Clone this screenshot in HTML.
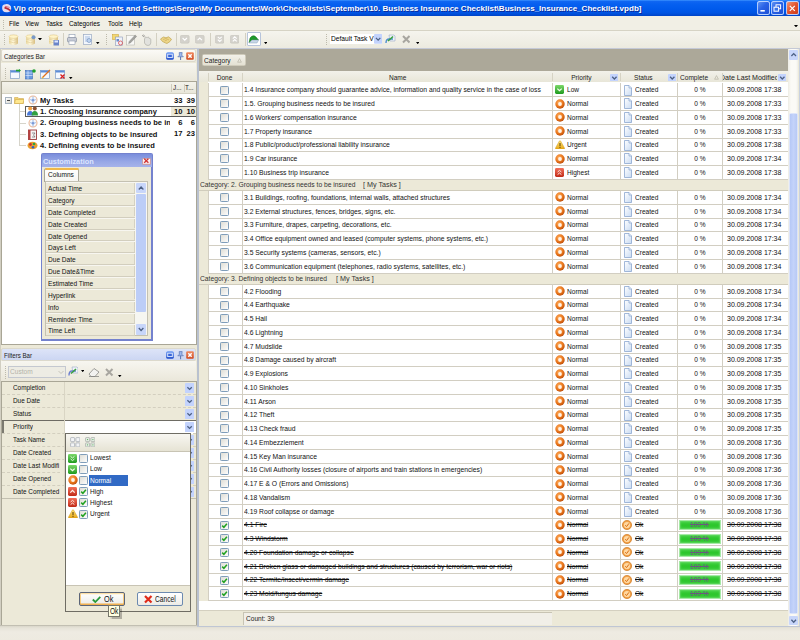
<!DOCTYPE html>
<html><head><meta charset="utf-8"><style>
html,body{margin:0;padding:0;width:800px;height:640px;overflow:hidden;background:#ECE9D8}
body{position:relative;font-family:"Liberation Sans",sans-serif}
body>div,body>svg{position:absolute}
div{box-sizing:border-box}
.t{position:absolute;white-space:nowrap;line-height:1;font-family:"Liberation Sans",sans-serif}
</style></head><body>
<div style="left:0;top:0;width:800px;height:15.8px;background:linear-gradient(#3D93FF 0px,#0F66F2 1.5px,#0660F0 4px,#005AEC 9px,#0054E2 13px,#0044C8 15.8px)"></div>
<svg style="position:absolute;left:1px;top:2.5px" width="11" height="10" viewBox="0 0 11 10"><path d="M1.2 4 Q1.5 1.2 4.5 1.2 Q7 0.8 8.6 2 Q10.6 3 10.2 6 Q9.8 9 6.5 9.2 Q3.5 9.6 2 8 Q0.8 6.5 1.2 4 Z" fill="#F2E4EE" opacity="0.95"/><path d="M3.5 4.6 Q6.5 5.2 9.6 7.6" fill="none" stroke="#B82838" stroke-width="1.6"/><path d="M4 3.4 Q6.5 3.4 8.6 4.6" fill="none" stroke="#D86878" stroke-width="0.9"/></svg>
<div class="t" style="left:13.5px;top:4.68px;font-size:8.05px;font-weight:bold;color:#FFFFFF;transform:scaleX(1.0);transform-origin:0 0;text-shadow:1px 1px 0 #0A2A9A;">Vip organizer [C:\Documents and Settings\Serge\My Documents\Work\Checklists\September\10. Business Insurance Checklist\Business_Insurance_Checklist.vpdb]</div>
<div style="left:757px;top:1.4px;width:12.6px;height:13.2px;border-radius:2.5px;background:linear-gradient(135deg,#6A9CF4,#2A62E6 45%,#1C4CD0);box-shadow:inset 0 0 0 0.9px #B8D2FF"></div>
<svg style="position:absolute;left:757px;top:1.5px" width="12.5" height="13" viewBox="0 0 12.5 13"><rect x="3.4" y="8" width="4.4" height="1.6" fill="#fff"/></svg>
<div style="left:771.3px;top:1.4px;width:12.6px;height:13.2px;border-radius:2.5px;background:linear-gradient(135deg,#6A9CF4,#2A62E6 45%,#1C4CD0);box-shadow:inset 0 0 0 0.9px #B8D2FF"></div>
<svg style="position:absolute;left:771.3px;top:1.5px" width="12.5" height="13" viewBox="0 0 12.5 13"><rect x="5" y="2.8" width="4.6" height="4" fill="none" stroke="#fff" stroke-width="1"/><rect x="3" y="5.2" width="4.6" height="4" fill="#3A72E8" stroke="#fff" stroke-width="1"/></svg>
<div style="left:786px;top:1.4px;width:12.6px;height:13.2px;border-radius:2.5px;background:linear-gradient(135deg,#F0A080,#E2542E 50%,#C83818);box-shadow:inset 0 0 0 0.9px #B8D2FF"></div>
<svg style="position:absolute;left:786px;top:1.5px" width="12.5" height="13" viewBox="0 0 12.5 13"><path d="M3.8 3.8 L8.8 8.8 M8.8 3.8 L3.8 8.8" stroke="#fff" stroke-width="1.2"/></svg>
<div style="left:0px;top:15.8px;width:800px;height:14.7px;background:#F1EFE5"></div>
<div style="left:0px;top:30.3px;width:800px;height:0.9px;background:#D6D3C5"></div>
<div style="left:3px;top:19.5px;width:1px;height:1px;background:#BDBAAC"></div>
<div style="left:3px;top:21.5px;width:1px;height:1px;background:#BDBAAC"></div>
<div style="left:3px;top:23.5px;width:1px;height:1px;background:#BDBAAC"></div>
<div style="left:3px;top:25.5px;width:1px;height:1px;background:#BDBAAC"></div>
<div style="left:3px;top:27.5px;width:1px;height:1px;background:#BDBAAC"></div>
<div class="t" style="left:8.7px;top:19.62px;font-size:8.0px;color:#000;transform:scaleX(0.8);transform-origin:0 0;">File</div>
<div class="t" style="left:25px;top:19.62px;font-size:8.0px;color:#000;transform:scaleX(0.8);transform-origin:0 0;">View</div>
<div class="t" style="left:45.5px;top:19.62px;font-size:8.0px;color:#000;transform:scaleX(0.8);transform-origin:0 0;">Tasks</div>
<div class="t" style="left:68.5px;top:19.62px;font-size:8.0px;color:#000;transform:scaleX(0.8);transform-origin:0 0;">Categories</div>
<div class="t" style="left:107.5px;top:19.62px;font-size:8.0px;color:#000;transform:scaleX(0.8);transform-origin:0 0;">Tools</div>
<div class="t" style="left:128.8px;top:19.62px;font-size:8.0px;color:#000;transform:scaleX(0.8);transform-origin:0 0;">Help</div>
<svg style="position:absolute;left:793.5px;top:24.8px" width="4" height="2.4" viewBox="0 0 4 2.4"><path d="M0 0 L4 0 L2 2.4 Z" fill="#000"/></svg>
<div style="left:0px;top:31.2px;width:800px;height:16.6px;background:linear-gradient(#F5F4EE,#ECEADF)"></div>
<div style="left:0px;top:47.5px;width:800px;height:1.2px;background:#C4C9D6"></div>
<div style="left:3.5px;top:34px;width:1px;height:1px;background:#BDBAAC"></div>
<div style="left:3.5px;top:36px;width:1px;height:1px;background:#BDBAAC"></div>
<div style="left:3.5px;top:38px;width:1px;height:1px;background:#BDBAAC"></div>
<div style="left:3.5px;top:40px;width:1px;height:1px;background:#BDBAAC"></div>
<div style="left:3.5px;top:42px;width:1px;height:1px;background:#BDBAAC"></div>
<div style="left:3.5px;top:44px;width:1px;height:1px;background:#BDBAAC"></div>
<svg style="position:absolute;left:8px;top:33.5px" width="11" height="12" viewBox="0 0 11 12"><defs><linearGradient id="dbg" x1="0" x2="1"><stop offset="0" stop-color="#EAD8A0"/><stop offset="0.45" stop-color="#FFF8DC"/><stop offset="1" stop-color="#D8BE80"/></linearGradient></defs><path d="M1 2.5 Q5.5 -0.5 10 2.5 L10 9.5 Q5.5 12.5 1 9.5 Z" fill="url(#dbg)"/><ellipse cx="5.5" cy="2.6" rx="4.5" ry="1.8" fill="#FFF4C8" stroke="#D8C080" stroke-width="0.5"/><path d="M1 5 Q5.5 7.5 10 5 M1 7.5 Q5.5 10 10 7.5" fill="none" stroke="#DCC488" stroke-width="0.5"/></svg>
<svg style="position:absolute;left:24.5px;top:33.5px" width="11" height="12" viewBox="0 0 11 12"><defs><linearGradient id="dbg" x1="0" x2="1"><stop offset="0" stop-color="#EAD8A0"/><stop offset="0.45" stop-color="#FFF8DC"/><stop offset="1" stop-color="#D8BE80"/></linearGradient></defs><path d="M1 2.5 Q5.5 -0.5 10 2.5 L10 9.5 Q5.5 12.5 1 9.5 Z" fill="url(#dbg)"/><ellipse cx="5.5" cy="2.6" rx="4.5" ry="1.8" fill="#FFF4C8" stroke="#D8C080" stroke-width="0.5"/><path d="M1 5 Q5.5 7.5 10 5 M1 7.5 Q5.5 10 10 7.5" fill="none" stroke="#DCC488" stroke-width="0.5"/><circle cx="8.5" cy="3.2" r="2" fill="#7A9AC8"/></svg>
<svg style="position:absolute;left:38px;top:37.5px" width="4" height="2.5" viewBox="0 0 4 2.5"><path d="M0 0 L4 0 L2 2.5 Z" fill="#000"/></svg>
<svg style="position:absolute;left:47.5px;top:33.5px" width="11" height="12" viewBox="0 0 11 12"><defs><linearGradient id="dbg" x1="0" x2="1"><stop offset="0" stop-color="#EAD8A0"/><stop offset="0.45" stop-color="#FFF8DC"/><stop offset="1" stop-color="#D8BE80"/></linearGradient></defs><path d="M1 2.5 Q5.5 -0.5 10 2.5 L10 9.5 Q5.5 12.5 1 9.5 Z" fill="url(#dbg)"/><ellipse cx="5.5" cy="2.6" rx="4.5" ry="1.8" fill="#FFF4C8" stroke="#D8C080" stroke-width="0.5"/><path d="M1 5 Q5.5 7.5 10 5 M1 7.5 Q5.5 10 10 7.5" fill="none" stroke="#DCC488" stroke-width="0.5"/><rect x="5.5" y="6" width="5.5" height="5.5" fill="#6A84C8"/><rect x="6.5" y="6.5" width="3.5" height="2" fill="#DDE6FF"/></svg>
<div style="left:62.5px;top:33px;width:0.8px;height:13px;background:#D3D0C2"></div>
<svg style="position:absolute;left:67px;top:34px" width="10" height="11" viewBox="0 0 10 11"><rect x="2" y="0.5" width="6" height="3.5" fill="#fff" stroke="#8C9AB0" stroke-width="0.6"/><rect x="0.5" y="3.5" width="9" height="4.5" rx="1" fill="#C8CCD6" stroke="#7C8698" stroke-width="0.6"/><rect x="2" y="7" width="6" height="3.5" fill="#fff" stroke="#8C9AB0" stroke-width="0.6"/></svg>
<svg style="position:absolute;left:82.5px;top:34px" width="10" height="11" viewBox="0 0 10 11"><rect x="0.5" y="0.5" width="8" height="10" fill="#F2F6FC" stroke="#9AAAC4" stroke-width="0.7"/><path d="M2 3 H7 M2 5 H7 M2 7 H6" stroke="#8AAAD8" stroke-width="0.7"/><circle cx="6" cy="6.5" r="2" fill="#BFD4F0" stroke="#6A8AB8" stroke-width="0.6"/></svg>
<svg style="position:absolute;left:96px;top:42px" width="3.5" height="2.2" viewBox="0 0 3.5 2.2"><path d="M0 0 L3.5 0 L1.75 2.2 Z" fill="#000"/></svg>
<div style="left:105.5px;top:34px;width:1px;height:1px;background:#BDBAAC"></div>
<div style="left:105.5px;top:36px;width:1px;height:1px;background:#BDBAAC"></div>
<div style="left:105.5px;top:38px;width:1px;height:1px;background:#BDBAAC"></div>
<div style="left:105.5px;top:40px;width:1px;height:1px;background:#BDBAAC"></div>
<div style="left:105.5px;top:42px;width:1px;height:1px;background:#BDBAAC"></div>
<div style="left:105.5px;top:44px;width:1px;height:1px;background:#BDBAAC"></div>
<svg style="position:absolute;left:111.5px;top:33.5px" width="11" height="12" viewBox="0 0 11 12"><rect x="0.5" y="0.5" width="6" height="5" fill="#F4D870" stroke="#C8A030" stroke-width="0.5"/><rect x="3.5" y="3" width="7" height="8.5" fill="#EEF2FA" stroke="#8C9AB8" stroke-width="0.6"/><rect x="4.5" y="5" width="2.5" height="2.5" fill="#6A8ACB"/><circle cx="8.5" cy="9" r="2" fill="none" stroke="#E05050" stroke-width="0.8"/></svg>
<svg style="position:absolute;left:125.5px;top:33.5px" width="11" height="12" viewBox="0 0 11 12"><rect x="0.5" y="1.5" width="8" height="9.5" fill="#F8F8F6" stroke="#B4B4AE" stroke-width="0.6"/><path d="M2.6 9.6 L3.2 7.4 L9.2 1 L10.6 2.4 L4.6 8.8 Z" fill="#A2A29E" stroke="#7E7E7A" stroke-width="0.4"/></svg>
<svg style="position:absolute;left:140.5px;top:33.5px" width="11" height="12" viewBox="0 0 11 12"><path d="M3.5 5 L3.5 9 Q4.5 11.5 7 11.5 Q9.5 11.5 9.8 9 L9.8 5.5 Q9.8 4.5 8.8 4.5 L8.2 4.5 L8 3.5 Q7.2 2.8 6.5 3.4 L5.2 3.4 Q4.6 3 4.2 3.6 Z" fill="#E2E2DE" stroke="#A6A6A0" stroke-width="0.6"/><path d="M1 1.2 L3.2 3.2 M2.5 0.6 L3.8 2.6" stroke="#9A9A94" stroke-width="0.9"/></svg>
<div style="left:156px;top:33px;width:0.8px;height:13px;background:#D3D0C2"></div>
<svg style="position:absolute;left:159.5px;top:34.5px" width="12" height="10" viewBox="0 0 12 10"><path d="M0.5 4 L3.5 2 L6 2.8 L8.5 1.8 L11.5 4.2 L10 6.5 L7 8.5 L5.5 8 L2.5 6.5 Z" fill="#EDD68A" stroke="#B89A40" stroke-width="0.6"/><path d="M3 4.5 L6 3.5 L9 5 M4.5 6 L7 5" fill="none" stroke="#C8A850" stroke-width="0.6"/></svg>
<div style="left:175.5px;top:33px;width:0.8px;height:13px;background:#D3D0C2"></div>
<svg style="position:absolute;left:180.2px;top:35.3px" width="9.5" height="8.5" viewBox="0 0 9.5 8.5"><rect x="0.3" y="0.3" width="8.9" height="7.9" rx="1.5" fill="#D4D2CC" stroke="#C2C0B8" stroke-width="0.5"/><path d="M2.6 3 L4.75 5.2 L6.9 3" fill="none" stroke="#FFFFFF" stroke-width="1.1"/></svg>
<svg style="position:absolute;left:195.3px;top:35.3px" width="9.5" height="8.5" viewBox="0 0 9.5 8.5"><rect x="0.3" y="0.3" width="8.9" height="7.9" rx="1.5" fill="#D4D2CC" stroke="#C2C0B8" stroke-width="0.5"/><path d="M2.6 5.2 L4.75 3 L6.9 5.2" fill="none" stroke="#FFFFFF" stroke-width="1.1"/></svg>
<div style="left:209.6px;top:33px;width:0.8px;height:13px;background:#D3D0C2"></div>
<svg style="position:absolute;left:214.8px;top:35.3px" width="9.5" height="8.5" viewBox="0 0 9.5 8.5"><rect x="0.3" y="0.3" width="8.9" height="7.9" rx="1.5" fill="#D4D2CC" stroke="#C2C0B8" stroke-width="0.5"/><path d="M2.8 1.8 L4.75 3.6 L6.7 1.8 M2.8 4.6 L4.75 6.4 L6.7 4.6" fill="none" stroke="#FFFFFF" stroke-width="1.1"/></svg>
<svg style="position:absolute;left:229.8px;top:35.3px" width="9.5" height="8.5" viewBox="0 0 9.5 8.5"><rect x="0.3" y="0.3" width="8.9" height="7.9" rx="1.5" fill="#D4D2CC" stroke="#C2C0B8" stroke-width="0.5"/><path d="M2.8 3.6 L4.75 1.8 L6.7 3.6 M2.8 6.4 L4.75 4.6 L6.7 6.4" fill="none" stroke="#FFFFFF" stroke-width="1.1"/></svg>
<div style="left:244.6px;top:33px;width:0.8px;height:13px;background:#D3D0C2"></div>
<div style="left:246.5px;top:32.2px;width:14px;height:13.8px;background:#FFFFFF;border:0.8px solid #B7C4DB;box-sizing:border-box;border-radius:1px"></div>
<svg style="position:absolute;left:248px;top:34px" width="11" height="10" viewBox="0 0 11 10"><path d="M1 9 L2 4 Q5 0 8 3 L10.5 6 L4 6 Z" fill="#1E9A2A" stroke="#0E6A18" stroke-width="0.5"/><path d="M1 9 L4 6 L10.5 6 L9 9 Z" fill="#C8D8E8" stroke="#8AA0B8" stroke-width="0.5"/></svg>
<svg style="position:absolute;left:263.5px;top:42.2px" width="3.5" height="2.2" viewBox="0 0 3.5 2.2"><path d="M0 0 L3.5 0 L1.75 2.2 Z" fill="#000"/></svg>
<div style="left:326px;top:34px;width:1px;height:1px;background:#BDBAAC"></div>
<div style="left:326px;top:36px;width:1px;height:1px;background:#BDBAAC"></div>
<div style="left:326px;top:38px;width:1px;height:1px;background:#BDBAAC"></div>
<div style="left:326px;top:40px;width:1px;height:1px;background:#BDBAAC"></div>
<div style="left:326px;top:42px;width:1px;height:1px;background:#BDBAAC"></div>
<div style="left:326px;top:44px;width:1px;height:1px;background:#BDBAAC"></div>
<div style="left:329.8px;top:34.2px;width:52.5px;height:10.2px;background:#FFFFFF"></div>
<div class="t" style="left:331.2px;top:35.32px;font-size:8.0px;color:#000;transform:scaleX(0.83);transform-origin:0 0;width:52px;overflow:hidden;">Default Task V</div>
<svg style="position:absolute;left:374px;top:34.4px" width="8.3" height="9.8" viewBox="0 0 8.3 9.8"><rect x="0" y="0" width="8.3" height="9.8" rx="1" fill="#C3D3FD"/><path d="M2.3 3 L4.5 5.2 L6.7 3" transform="translate(-0.34999999999999964,0.9000000000000004)" fill="none" stroke="#4D6185" stroke-width="1.3"/></svg>
<svg style="position:absolute;left:385.4px;top:34px" width="11" height="11" viewBox="0 0 11 11"><path d="M4 1 L9 1 L10 2 L10 7 L5 7 Z" fill="#F0F4FA" stroke="#9AAAC8" stroke-width="0.6"/><path d="M1 9 Q1 5 4 5 L8 5" fill="none" stroke="#4E8ED0" stroke-width="1.4"/><path d="M3 7 L8 2.5" stroke="#3AA040" stroke-width="1.6"/></svg>
<svg style="position:absolute;left:401.6px;top:35px" width="8.5" height="8.5" viewBox="0 0 8.5 8.5"><path d="M1 1 L7.5 7.5 M7.5 1 L1 7.5" stroke="#A8A6A0" stroke-width="2"/></svg>
<svg style="position:absolute;left:415.8px;top:42.2px" width="3.5" height="2.2" viewBox="0 0 3.5 2.2"><path d="M0 0 L3.5 0 L1.75 2.2 Z" fill="#000"/></svg>
<div style="left:0px;top:48.7px;width:197px;height:591.3px;background:#ECE9D8"></div>
<div style="left:0px;top:48.7px;width:0.9px;height:577px;background:#D2CFC2"></div>
<div style="left:1.3px;top:48.8px;width:195px;height:13.700000000000003px;background:linear-gradient(#FBFAF6,#F1EFE6);border:0.7px solid #DCD9CC;box-sizing:border-box;border-radius:2px"></div>
<div class="t" style="left:3.8px;top:52.72px;font-size:8.0px;color:#222;transform:scaleX(0.77);transform-origin:0 0;">Categories Bar</div>
<svg style="position:absolute;left:166px;top:51.9px" width="8" height="8" viewBox="0 0 8 8"><defs><linearGradient id="dk" x1="0" y1="0" x2="0" y2="1"><stop offset="0" stop-color="#6A9AF4"/><stop offset="1" stop-color="#1A48C8"/></linearGradient></defs><rect x="0.2" y="0.2" width="7.6" height="7.6" rx="1.6" fill="url(#dk)"/><rect x="1.7" y="2.2" width="4.6" height="3.4" fill="#3A66D8" stroke="#E8F0FF" stroke-width="0.9"/></svg>
<svg style="position:absolute;left:176.5px;top:51.9px" width="7" height="8.5" viewBox="0 0 7 8.5"><path d="M2.2 0.6 H5.2 L4.8 3.2 L6.4 4.8 H0.8 L2.4 3.2 Z" fill="#9CB8F0" stroke="#4A66A8" stroke-width="0.6"/><path d="M3.6 4.8 V8.2" stroke="#4A66A8" stroke-width="0.9"/></svg>
<svg style="position:absolute;left:186px;top:51.9px" width="8" height="8" viewBox="0 0 8 8"><defs><linearGradient id="cl" x1="0" y1="0" x2="0" y2="1"><stop offset="0" stop-color="#F08A60"/><stop offset="1" stop-color="#D04A20"/></linearGradient></defs><rect x="0.2" y="0.2" width="7.6" height="7.6" rx="1" fill="url(#cl)"/><path d="M2.3 2.3 L5.7 5.7 M5.7 2.3 L2.3 5.7" stroke="#fff" stroke-width="1.5"/></svg>
<div style="left:1.3px;top:62.5px;width:195px;height:18.8px;background:linear-gradient(#F7F6F0,#EAE7DA)"></div>
<div style="left:4.5px;top:67.5px;width:1px;height:1px;background:#BDBAAC"></div>
<div style="left:4.5px;top:69.5px;width:1px;height:1px;background:#BDBAAC"></div>
<div style="left:4.5px;top:71.5px;width:1px;height:1px;background:#BDBAAC"></div>
<div style="left:4.5px;top:73.5px;width:1px;height:1px;background:#BDBAAC"></div>
<div style="left:4.5px;top:75.5px;width:1px;height:1px;background:#BDBAAC"></div>
<div style="left:4.5px;top:77.5px;width:1px;height:1px;background:#BDBAAC"></div>
<svg style="position:absolute;left:10px;top:68.5px" width="11" height="11" viewBox="0 0 11 11"><rect x="0.5" y="1.5" width="9" height="8" fill="#F4F8FF" stroke="#7C9CC8" stroke-width="0.7"/><rect x="0.5" y="1.5" width="9" height="2" fill="#5C8CD8"/><path d="M6 1.5 L10 1.5" stroke="#20A030" stroke-width="1.6"/><path d="M9 0 L11 1.5 L9 3" fill="#20A030"/></svg>
<svg style="position:absolute;left:25px;top:68.5px" width="11" height="11" viewBox="0 0 11 11"><rect x="0.5" y="1.5" width="7" height="8.5" fill="#6A9AE0" stroke="#3A6AB8" stroke-width="0.6"/><path d="M0.5 4 H7.5 M0.5 6.5 H7.5 M3 1.5 V10" stroke="#E8F0FF" stroke-width="0.6"/><circle cx="9" cy="2" r="1.8" fill="#20A030"/></svg>
<svg style="position:absolute;left:40px;top:68.5px" width="11" height="11" viewBox="0 0 11 11"><rect x="0.5" y="1.5" width="9" height="8" fill="#F4F8FF" stroke="#7C9CC8" stroke-width="0.7"/><rect x="0.5" y="1.5" width="9" height="2" fill="#5C8CD8"/><path d="M2 9 L10 1" stroke="#E07020" stroke-width="1.3"/><path d="M2 9 L3.5 8.5" stroke="#F0D040" stroke-width="1.3"/></svg>
<svg style="position:absolute;left:55px;top:68.5px" width="11" height="11" viewBox="0 0 11 11"><rect x="0.5" y="1.5" width="9" height="8" fill="#F4F8FF" stroke="#7C9CC8" stroke-width="0.7"/><rect x="0.5" y="1.5" width="9" height="2" fill="#5C8CD8"/><path d="M5.5 5.5 L9.5 9.5 M9.5 5.5 L5.5 9.5" stroke="#D82020" stroke-width="1.3"/></svg>
<svg style="position:absolute;left:69px;top:76.5px" width="3.5" height="2.2" viewBox="0 0 3.5 2.2"><path d="M0 0 L3.5 0 L1.75 2.2 Z" fill="#000"/></svg>
<div style="left:1.2px;top:81.2px;width:195.6px;height:264px;background:#FFFFFF;border:0.8px solid #A9A696;box-sizing:border-box"></div>
<div style="left:2px;top:82px;width:194px;height:11px;background:linear-gradient(#F3F2EA,#E9E7DA)"></div>
<div style="left:2px;top:92.6px;width:194px;height:0.8px;background:#D5D2C3"></div>
<div style="left:171px;top:83.5px;width:0.7px;height:8.5px;background:#CFCCBD"></div>
<div style="left:183.5px;top:83.5px;width:0.7px;height:8.5px;background:#CFCCBD"></div>
<div class="t" style="left:172.7px;top:83.52px;font-size:8.0px;color:#222;transform:scaleX(0.8);transform-origin:0 0;">J...</div>
<div class="t" style="left:185.2px;top:83.52px;font-size:8.0px;color:#222;transform:scaleX(0.8);transform-origin:0 0;">T...</div>
<div style="left:5px;top:97px;width:6.5px;height:6.5px;border:0.7px solid #A8B4C0;box-sizing:border-box;background:linear-gradient(135deg,#FFFFFF,#D8D8D0)"></div>
<div style="left:6.5px;top:99.9px;width:3.5px;height:0.8px;background:#4A4A4A"></div>
<div style="left:19.3px;top:104px;width:0.8px;height:41.5px;background:#D6D4CA"></div>
<div style="left:20px;top:111.3px;width:5.5px;height:0.8px;background:#D6D4CA"></div>
<div style="left:20px;top:122.5px;width:5.5px;height:0.8px;background:#D6D4CA"></div>
<div style="left:20px;top:133.8px;width:5.5px;height:0.8px;background:#D6D4CA"></div>
<div style="left:20px;top:145px;width:5.5px;height:0.8px;background:#D6D4CA"></div>
<svg style="position:absolute;left:13.5px;top:96px" width="10" height="8" viewBox="0 0 10 8"><path d="M0.5 1.5 H4 L5 2.5 H9.5 V7.5 H0.5 Z" fill="#F0D070" stroke="#C8A040" stroke-width="0.5"/><path d="M1.5 3.5 H10 L9 7.5 H0.5 Z" fill="#FFE890" stroke="#C8A040" stroke-width="0.5"/></svg>
<svg style="position:absolute;left:27.5px;top:95px" width="10" height="10" viewBox="0 0 10 10"><circle cx="5" cy="5" r="4" fill="#F4F8FF" stroke="#EAB898" stroke-width="1.1"/><path d="M5 1.5 V8.5 M2.2 4.6 Q5 6.2 7.8 4.6" fill="none" stroke="#8AAAD8" stroke-width="0.8"/><circle cx="5" cy="5.2" r="1.2" fill="#7A9AD8"/></svg>
<div class="t" style="left:40px;top:96.85px;font-size:7.5px;font-weight:bold;color:#111;transform:scaleX(1.0);transform-origin:0 0;letter-spacing:0.05px;">My Tasks</div>
<div class="t" style="left:182.5px;width:0;display:flex;justify-content:flex-end;top:96.76px;font-size:7.6px;font-weight:bold;color:#111;"><span style="display:inline-block;transform:scaleX(1.0);transform-origin:100% 0">33</span></div>
<div class="t" style="left:195px;width:0;display:flex;justify-content:flex-end;top:96.76px;font-size:7.6px;font-weight:bold;color:#111;"><span style="display:inline-block;transform:scaleX(1.0);transform-origin:100% 0">39</span></div>
<div style="left:25.2px;top:105.6px;width:171px;height:11.3px;border:1px solid #5A5A5A;box-sizing:border-box;background:#fff"></div>
<div style="left:171px;top:106.6px;width:24.6px;height:9.3px;background:#ECE9D8"></div>
<svg style="position:absolute;left:27px;top:106.3px" width="11" height="10" viewBox="0 0 11 10"><circle cx="3.2" cy="2.6" r="2" fill="#F0A040"/><path d="M0 9.5 Q0 5 3.2 5 Q6.4 5 6.4 9.5 Z" fill="#4A7AD8"/><circle cx="7.8" cy="2.6" r="2" fill="#8A5030"/><path d="M4.6 9.5 Q4.6 5 7.8 5 Q11 5 11 9.5 Z" fill="#30A040"/></svg>
<div class="t" style="left:40px;top:108.05px;font-size:7.5px;font-weight:bold;color:#111;transform:scaleX(1.0);transform-origin:0 0;letter-spacing:0.05px;">1. Choosing insurance company</div>
<div class="t" style="left:182.5px;width:0;display:flex;justify-content:flex-end;top:107.96px;font-size:7.6px;font-weight:bold;color:#111;"><span style="display:inline-block;transform:scaleX(1.0);transform-origin:100% 0">10</span></div>
<div class="t" style="left:195px;width:0;display:flex;justify-content:flex-end;top:107.96px;font-size:7.6px;font-weight:bold;color:#111;"><span style="display:inline-block;transform:scaleX(1.0);transform-origin:100% 0">10</span></div>
<svg style="position:absolute;left:27.5px;top:117.5px" width="10" height="10" viewBox="0 0 10 10"><circle cx="5" cy="5" r="4" fill="#F4F8FF" stroke="#EAB898" stroke-width="1.1"/><path d="M5 1.5 V8.5 M2.2 4.6 Q5 6.2 7.8 4.6" fill="none" stroke="#8AAAD8" stroke-width="0.8"/><circle cx="5" cy="5.2" r="1.2" fill="#7A9AD8"/></svg>
<div class="t" style="left:40px;top:119.35px;font-size:7.5px;font-weight:bold;color:#111;transform:scaleX(1.0);transform-origin:0 0;letter-spacing:0.05px;">2. Grouping business needs to be in:</div>
<div style="left:170px;top:118px;width:26px;height:10px;background:#fff"></div>
<div class="t" style="left:182.5px;width:0;display:flex;justify-content:flex-end;top:119.26px;font-size:7.6px;font-weight:bold;color:#111;"><span style="display:inline-block;transform:scaleX(1.0);transform-origin:100% 0">6</span></div>
<div class="t" style="left:195px;width:0;display:flex;justify-content:flex-end;top:119.26px;font-size:7.6px;font-weight:bold;color:#111;"><span style="display:inline-block;transform:scaleX(1.0);transform-origin:100% 0">6</span></div>
<svg style="position:absolute;left:28px;top:128.5px" width="9" height="11" viewBox="0 0 9 11"><rect x="0.5" y="1" width="8" height="9.5" fill="#F6F2F2" stroke="#9A3A3A" stroke-width="0.9"/><rect x="0.5" y="1" width="2" height="9.5" fill="#B84040"/><path d="M4 4 H7 L5.5 6 L7 8 H4" fill="none" stroke="#555" stroke-width="0.6"/></svg>
<div class="t" style="left:40px;top:130.55px;font-size:7.5px;font-weight:bold;color:#111;transform:scaleX(1.0);transform-origin:0 0;letter-spacing:0.05px;">3. Defining objects to be insured</div>
<div class="t" style="left:182.5px;width:0;display:flex;justify-content:flex-end;top:130.46px;font-size:7.6px;font-weight:bold;color:#111;"><span style="display:inline-block;transform:scaleX(1.0);transform-origin:100% 0">17</span></div>
<div class="t" style="left:195px;width:0;display:flex;justify-content:flex-end;top:130.46px;font-size:7.6px;font-weight:bold;color:#111;"><span style="display:inline-block;transform:scaleX(1.0);transform-origin:100% 0">23</span></div>
<svg style="position:absolute;left:27px;top:140.5px" width="11" height="9" viewBox="0 0 11 9"><ellipse cx="5.5" cy="4.5" rx="5" ry="3.8" fill="#E8A030"/><circle cx="3.5" cy="3.5" r="1.4" fill="#D03030"/><circle cx="7" cy="3" r="1.3" fill="#30A040"/><circle cx="6" cy="6.2" r="1.3" fill="#3060C0"/></svg>
<div class="t" style="left:40px;top:141.75px;font-size:7.5px;font-weight:bold;color:#111;transform:scaleX(1.0);transform-origin:0 0;letter-spacing:0.05px;">4. Defining events to be insured</div>
<div style="left:40.8px;top:153px;width:111.8px;height:188px;background:#7482CE;border-radius:2px 2px 0 0"></div>
<div style="left:41.6px;top:153.6px;width:110.2px;height:13px;background:linear-gradient(#7A8EDC,#98A8E6 60%,#A6B3EA)"></div>
<div class="t" style="left:43.2px;top:157.92px;font-size:8.0px;font-weight:bold;color:#DDE6FF;transform:scaleX(0.92);transform-origin:0 0;">Customization</div>
<div style="left:141.6px;top:157.6px;width:9px;height:7.2px;background:linear-gradient(#FFFFFF,#F2D8DC);border:0.6px solid #C8A0A8;box-sizing:border-box;border-radius:1px"></div>
<svg style="position:absolute;left:142.8px;top:158.4px" width="6.6" height="5.6" viewBox="0 0 6.6 5.6"><path d="M1.2 0.8 L5.4 4.8 M5.4 0.8 L1.2 4.8" stroke="#D03030" stroke-width="1.2"/></svg>
<div style="left:42.3px;top:166.6px;width:108.8px;height:172.7px;background:#ECE9D8"></div>
<div style="left:44.4px;top:168px;width:34.8px;height:14.2px;background:linear-gradient(#FFFFFF,#F6F5F0);border:0.7px solid #A8A698;border-bottom:none;box-sizing:border-box;border-radius:2.5px 2.5px 0 0"></div>
<div style="left:44.6px;top:168px;width:34.4px;height:1.8px;background:#F0B848;border-radius:2px 2px 0 0"></div>
<div class="t" style="left:48.2px;top:171.12px;font-size:8.0px;color:#111;transform:scaleX(0.82);transform-origin:0 0;">Columns</div>
<div style="left:44.6px;top:180.8px;width:103.2px;height:155px;background:#F8F7F2;border:1.2px solid #C4C1B2;box-sizing:border-box"></div>
<div style="left:45.7px;top:182.20px;width:89.3px;height:11.9px;background:#ECE9D8;border-top:0.8px solid #F7F6F0;border-bottom:1px solid #D2CEBE;box-sizing:border-box"></div>
<div style="left:134.2px;top:183.2px;width:0.7px;height:9.6px;background:#D5D1C0"></div>
<div class="t" style="left:47.5px;top:185.22px;font-size:8.0px;color:#111;transform:scaleX(0.82);transform-origin:0 0;">Actual Time</div>
<div style="left:45.7px;top:194.05px;width:89.3px;height:11.9px;background:#ECE9D8;border-top:0.8px solid #F7F6F0;border-bottom:1px solid #D2CEBE;box-sizing:border-box"></div>
<div style="left:134.2px;top:195.04999999999998px;width:0.7px;height:9.6px;background:#D5D1C0"></div>
<div class="t" style="left:47.5px;top:197.07px;font-size:8.0px;color:#111;transform:scaleX(0.82);transform-origin:0 0;">Category</div>
<div style="left:45.7px;top:205.90px;width:89.3px;height:11.9px;background:#ECE9D8;border-top:0.8px solid #F7F6F0;border-bottom:1px solid #D2CEBE;box-sizing:border-box"></div>
<div style="left:134.2px;top:206.89999999999998px;width:0.7px;height:9.6px;background:#D5D1C0"></div>
<div class="t" style="left:47.5px;top:208.92px;font-size:8.0px;color:#111;transform:scaleX(0.82);transform-origin:0 0;">Date Completed</div>
<div style="left:45.7px;top:217.75px;width:89.3px;height:11.9px;background:#ECE9D8;border-top:0.8px solid #F7F6F0;border-bottom:1px solid #D2CEBE;box-sizing:border-box"></div>
<div style="left:134.2px;top:218.75px;width:0.7px;height:9.6px;background:#D5D1C0"></div>
<div class="t" style="left:47.5px;top:220.77px;font-size:8.0px;color:#111;transform:scaleX(0.82);transform-origin:0 0;">Date Created</div>
<div style="left:45.7px;top:229.60px;width:89.3px;height:11.9px;background:#ECE9D8;border-top:0.8px solid #F7F6F0;border-bottom:1px solid #D2CEBE;box-sizing:border-box"></div>
<div style="left:134.2px;top:230.6px;width:0.7px;height:9.6px;background:#D5D1C0"></div>
<div class="t" style="left:47.5px;top:232.62px;font-size:8.0px;color:#111;transform:scaleX(0.82);transform-origin:0 0;">Date Opened</div>
<div style="left:45.7px;top:241.45px;width:89.3px;height:11.9px;background:#ECE9D8;border-top:0.8px solid #F7F6F0;border-bottom:1px solid #D2CEBE;box-sizing:border-box"></div>
<div style="left:134.2px;top:242.45px;width:0.7px;height:9.6px;background:#D5D1C0"></div>
<div class="t" style="left:47.5px;top:244.47px;font-size:8.0px;color:#111;transform:scaleX(0.82);transform-origin:0 0;">Days Left</div>
<div style="left:45.7px;top:253.30px;width:89.3px;height:11.9px;background:#ECE9D8;border-top:0.8px solid #F7F6F0;border-bottom:1px solid #D2CEBE;box-sizing:border-box"></div>
<div style="left:134.2px;top:254.29999999999998px;width:0.7px;height:9.6px;background:#D5D1C0"></div>
<div class="t" style="left:47.5px;top:256.32px;font-size:8.0px;color:#111;transform:scaleX(0.82);transform-origin:0 0;">Due Date</div>
<div style="left:45.7px;top:265.15px;width:89.3px;height:11.9px;background:#ECE9D8;border-top:0.8px solid #F7F6F0;border-bottom:1px solid #D2CEBE;box-sizing:border-box"></div>
<div style="left:134.2px;top:266.15px;width:0.7px;height:9.6px;background:#D5D1C0"></div>
<div class="t" style="left:47.5px;top:268.17px;font-size:8.0px;color:#111;transform:scaleX(0.82);transform-origin:0 0;">Due Date&amp;Time</div>
<div style="left:45.7px;top:277.00px;width:89.3px;height:11.9px;background:#ECE9D8;border-top:0.8px solid #F7F6F0;border-bottom:1px solid #D2CEBE;box-sizing:border-box"></div>
<div style="left:134.2px;top:278.0px;width:0.7px;height:9.6px;background:#D5D1C0"></div>
<div class="t" style="left:47.5px;top:280.02px;font-size:8.0px;color:#111;transform:scaleX(0.82);transform-origin:0 0;">Estimated Time</div>
<div style="left:45.7px;top:288.85px;width:89.3px;height:11.9px;background:#ECE9D8;border-top:0.8px solid #F7F6F0;border-bottom:1px solid #D2CEBE;box-sizing:border-box"></div>
<div style="left:134.2px;top:289.84999999999997px;width:0.7px;height:9.6px;background:#D5D1C0"></div>
<div class="t" style="left:47.5px;top:291.87px;font-size:8.0px;color:#111;transform:scaleX(0.82);transform-origin:0 0;">Hyperlink</div>
<div style="left:45.7px;top:300.70px;width:89.3px;height:11.9px;background:#ECE9D8;border-top:0.8px solid #F7F6F0;border-bottom:1px solid #D2CEBE;box-sizing:border-box"></div>
<div style="left:134.2px;top:301.7px;width:0.7px;height:9.6px;background:#D5D1C0"></div>
<div class="t" style="left:47.5px;top:303.72px;font-size:8.0px;color:#111;transform:scaleX(0.82);transform-origin:0 0;">Info</div>
<div style="left:45.7px;top:312.55px;width:89.3px;height:11.9px;background:#ECE9D8;border-top:0.8px solid #F7F6F0;border-bottom:1px solid #D2CEBE;box-sizing:border-box"></div>
<div style="left:134.2px;top:313.54999999999995px;width:0.7px;height:9.6px;background:#D5D1C0"></div>
<div class="t" style="left:47.5px;top:315.57px;font-size:8.0px;color:#111;transform:scaleX(0.82);transform-origin:0 0;">Reminder Time</div>
<div style="left:45.7px;top:324.40px;width:89.3px;height:11.9px;background:#ECE9D8;border-top:0.8px solid #F7F6F0;border-bottom:1px solid #D2CEBE;box-sizing:border-box"></div>
<div style="left:134.2px;top:325.4px;width:0.7px;height:9.6px;background:#D5D1C0"></div>
<div class="t" style="left:47.5px;top:327.42px;font-size:8.0px;color:#111;transform:scaleX(0.82);transform-origin:0 0;">Time Left</div>
<div style="left:135.3px;top:182.3px;width:11px;height:153px;background:#F6F6F1"></div>
<div style="left:135.7px;top:182.6px;width:10.2px;height:10.5px;background:#C8D6FA;border-radius:1px"></div>
<svg style="position:absolute;left:135.7px;top:182.6px" width="10.2" height="10.5" viewBox="0 0 10.2 10.5"><path d="M2.8 6.5 L5.1 4 L7.4 6.5" fill="none" stroke="#4D6185" stroke-width="1.3"/></svg>
<div style="left:135.7px;top:194px;width:10.2px;height:118px;background:#BCCDF7;border-radius:1px"></div>
<div style="left:135.7px;top:324.3px;width:10.2px;height:10.5px;background:#C8D6FA;border-radius:1px"></div>
<svg style="position:absolute;left:135.7px;top:324.3px" width="10.2" height="10.5" viewBox="0 0 10.2 10.5"><path d="M2.8 4 L5.1 6.5 L7.4 4" fill="none" stroke="#4D6185" stroke-width="1.3"/></svg>
<div style="left:1.3px;top:348px;width:195px;height:13.300000000000011px;background:linear-gradient(#DDE4F8,#CCD6F2);border:0.7px solid #DCD9CC;box-sizing:border-box;border-radius:2px"></div>
<div class="t" style="left:3.8px;top:351.92px;font-size:8.0px;color:#222;transform:scaleX(0.77);transform-origin:0 0;">Filters Bar</div>
<svg style="position:absolute;left:166px;top:351.1px" width="8" height="8" viewBox="0 0 8 8"><defs><linearGradient id="dk" x1="0" y1="0" x2="0" y2="1"><stop offset="0" stop-color="#6A9AF4"/><stop offset="1" stop-color="#1A48C8"/></linearGradient></defs><rect x="0.2" y="0.2" width="7.6" height="7.6" rx="1.6" fill="url(#dk)"/><rect x="1.7" y="2.2" width="4.6" height="3.4" fill="#3A66D8" stroke="#E8F0FF" stroke-width="0.9"/></svg>
<svg style="position:absolute;left:176.5px;top:351.1px" width="7" height="8.5" viewBox="0 0 7 8.5"><path d="M2.2 0.6 H5.2 L4.8 3.2 L6.4 4.8 H0.8 L2.4 3.2 Z" fill="#9CB8F0" stroke="#4A66A8" stroke-width="0.6"/><path d="M3.6 4.8 V8.2" stroke="#4A66A8" stroke-width="0.9"/></svg>
<svg style="position:absolute;left:186px;top:351.1px" width="8" height="8" viewBox="0 0 8 8"><defs><linearGradient id="cl" x1="0" y1="0" x2="0" y2="1"><stop offset="0" stop-color="#F08A60"/><stop offset="1" stop-color="#D04A20"/></linearGradient></defs><rect x="0.2" y="0.2" width="7.6" height="7.6" rx="1" fill="url(#cl)"/><path d="M2.3 2.3 L5.7 5.7 M5.7 2.3 L2.3 5.7" stroke="#fff" stroke-width="1.5"/></svg>
<div style="left:1.3px;top:361.3px;width:195px;height:19.4px;background:linear-gradient(#F7F6F0,#EAE7DA)"></div>
<div style="left:4.5px;top:365.5px;width:1px;height:1px;background:#BDBAAC"></div>
<div style="left:4.5px;top:367.5px;width:1px;height:1px;background:#BDBAAC"></div>
<div style="left:4.5px;top:369.5px;width:1px;height:1px;background:#BDBAAC"></div>
<div style="left:4.5px;top:371.5px;width:1px;height:1px;background:#BDBAAC"></div>
<div style="left:4.5px;top:373.5px;width:1px;height:1px;background:#BDBAAC"></div>
<div style="left:4.5px;top:375.5px;width:1px;height:1px;background:#BDBAAC"></div>
<div style="left:4.5px;top:377.5px;width:1px;height:1px;background:#BDBAAC"></div>
<div style="left:7.5px;top:365.6px;width:58px;height:12px;background:#EDECE4;border:0.8px solid #C4C8D0;box-sizing:border-box"></div>
<div class="t" style="left:9.5px;top:368.32px;font-size:8.0px;color:#B4B3A8;transform:scaleX(0.82);transform-origin:0 0;">Custom</div>
<svg style="position:absolute;left:56.5px;top:367.5px" width="8" height="8" viewBox="0 0 8 8"><path d="M1.5 3 L4 5.5 L6.5 3" fill="none" stroke="#C8C6BC" stroke-width="1"/></svg>
<svg style="position:absolute;left:68px;top:366px" width="10" height="11" viewBox="0 0 10 11"><path d="M4 1 L9 1 L10 2 L10 7 L5 7 Z" fill="#F0F4FA" stroke="#9AAAC8" stroke-width="0.6"/><path d="M1 9.5 Q1 5 4 5 L8 5" fill="none" stroke="#6A7ED0" stroke-width="1.4"/><path d="M3 7.5 L8 3" stroke="#3AA040" stroke-width="1.6"/></svg>
<svg style="position:absolute;left:80.5px;top:370px" width="3.5" height="2.2" viewBox="0 0 3.5 2.2"><path d="M0 0 L3.5 0 L1.75 2.2 Z" fill="#000"/></svg>
<svg style="position:absolute;left:88px;top:366.5px" width="12" height="10" viewBox="0 0 12 10"><path d="M1 7 L6 1.5 L11 5 L7 9.5 L3 9.5 Z" fill="#F2F2F0" stroke="#888884" stroke-width="0.8"/><path d="M1 9.5 H11" stroke="#888884" stroke-width="0.8"/></svg>
<svg style="position:absolute;left:105px;top:368px" width="8.5" height="8.5" viewBox="0 0 8.5 8.5"><path d="M1 1 L7.5 7.5 M7.5 1 L1 7.5" stroke="#A8A6A0" stroke-width="2"/></svg>
<svg style="position:absolute;left:118px;top:374.5px" width="3.5" height="2.2" viewBox="0 0 3.5 2.2"><path d="M0 0 L3.5 0 L1.75 2.2 Z" fill="#000"/></svg>
<div style="left:1.2px;top:380.8px;width:195.6px;height:245px;background:#ECE9D8;border:0.8px solid #A9A696;border-bottom:0.8px solid #C8C5B8;box-sizing:border-box"></div>
<div style="left:2px;top:393.90px;width:194px;height:0;border-top:0.8px dashed #D3CFBF"></div>
<div style="left:63.5px;top:381.5px;width:0.8px;height:13px;background:#D9D5C4"></div>
<div class="t" style="left:13px;top:383.92px;font-size:8.0px;color:#111;transform:scaleX(0.8);transform-origin:0 0;">Completion</div>
<svg style="position:absolute;left:185px;top:382.8px" width="9.2" height="10.4" viewBox="0 0 9.2 10.4"><rect x="0" y="0" width="9.2" height="10.4" rx="1" fill="#C3D3FD"/><path d="M2.3 3 L4.5 5.2 L6.7 3" transform="translate(0.09999999999999964,1.2000000000000002)" fill="none" stroke="#4D6185" stroke-width="1.3"/></svg>
<div style="left:2px;top:406.90px;width:194px;height:0;border-top:0.8px dashed #D3CFBF"></div>
<div style="left:63.5px;top:394.5px;width:0.8px;height:13px;background:#D9D5C4"></div>
<div class="t" style="left:13px;top:396.92px;font-size:8.0px;color:#111;transform:scaleX(0.8);transform-origin:0 0;">Due Date</div>
<svg style="position:absolute;left:185px;top:395.8px" width="9.2" height="10.4" viewBox="0 0 9.2 10.4"><rect x="0" y="0" width="9.2" height="10.4" rx="1" fill="#C3D3FD"/><path d="M2.3 3 L4.5 5.2 L6.7 3" transform="translate(0.09999999999999964,1.2000000000000002)" fill="none" stroke="#4D6185" stroke-width="1.3"/></svg>
<div style="left:2px;top:419.9px;width:194px;height:1px;background:#6E6C64"></div>
<div style="left:63.5px;top:407.5px;width:0.8px;height:13px;background:#D9D5C4"></div>
<div class="t" style="left:13px;top:409.92px;font-size:8.0px;color:#111;transform:scaleX(0.8);transform-origin:0 0;">Status</div>
<svg style="position:absolute;left:185px;top:408.8px" width="9.2" height="10.4" viewBox="0 0 9.2 10.4"><rect x="0" y="0" width="9.2" height="10.4" rx="1" fill="#C3D3FD"/><path d="M2.3 3 L4.5 5.2 L6.7 3" transform="translate(0.09999999999999964,1.2000000000000002)" fill="none" stroke="#4D6185" stroke-width="1.3"/></svg>
<div style="left:64.5px;top:420.5px;width:131.5px;height:13px;background:#FFFFFF"></div>
<div style="left:2px;top:420.9px;width:1.6px;height:12.2px;background:#7C7A70"></div>
<div style="left:2px;top:432.90px;width:194px;height:0;border-top:0.8px dashed #D3CFBF"></div>
<div style="left:63.5px;top:420.5px;width:0.8px;height:13px;background:#D9D5C4"></div>
<div class="t" style="left:13px;top:422.92px;font-size:8.0px;color:#111;transform:scaleX(0.8);transform-origin:0 0;">Priority</div>
<svg style="position:absolute;left:185px;top:421.8px" width="9.2" height="10.4" viewBox="0 0 9.2 10.4"><rect x="0" y="0" width="9.2" height="10.4" rx="1" fill="#C3D3FD"/><path d="M2.3 3 L4.5 5.2 L6.7 3" transform="translate(0.09999999999999964,1.2000000000000002)" fill="none" stroke="#4D6185" stroke-width="1.3"/></svg>
<div style="left:2px;top:445.90px;width:194px;height:0;border-top:0.8px dashed #D3CFBF"></div>
<div style="left:63.5px;top:433.5px;width:0.8px;height:13px;background:#D9D5C4"></div>
<div class="t" style="left:13px;top:435.92px;font-size:8.0px;color:#111;transform:scaleX(0.8);transform-origin:0 0;">Task Name</div>
<svg style="position:absolute;left:185px;top:434.8px" width="9.2" height="10.4" viewBox="0 0 9.2 10.4"><rect x="0" y="0" width="9.2" height="10.4" rx="1" fill="#C3D3FD"/><path d="M2.3 3 L4.5 5.2 L6.7 3" transform="translate(0.09999999999999964,1.2000000000000002)" fill="none" stroke="#4D6185" stroke-width="1.3"/></svg>
<div style="left:2px;top:458.90px;width:194px;height:0;border-top:0.8px dashed #D3CFBF"></div>
<div style="left:63.5px;top:446.5px;width:0.8px;height:13px;background:#D9D5C4"></div>
<div class="t" style="left:13px;top:448.92px;font-size:8.0px;color:#111;transform:scaleX(0.8);transform-origin:0 0;">Date Created</div>
<svg style="position:absolute;left:185px;top:447.8px" width="9.2" height="10.4" viewBox="0 0 9.2 10.4"><rect x="0" y="0" width="9.2" height="10.4" rx="1" fill="#C3D3FD"/><path d="M2.3 3 L4.5 5.2 L6.7 3" transform="translate(0.09999999999999964,1.2000000000000002)" fill="none" stroke="#4D6185" stroke-width="1.3"/></svg>
<div style="left:2px;top:471.90px;width:194px;height:0;border-top:0.8px dashed #D3CFBF"></div>
<div style="left:63.5px;top:459.5px;width:0.8px;height:13px;background:#D9D5C4"></div>
<div class="t" style="left:13px;top:461.92px;font-size:8.0px;color:#111;transform:scaleX(0.8);transform-origin:0 0;">Date Last Modifi</div>
<svg style="position:absolute;left:185px;top:460.8px" width="9.2" height="10.4" viewBox="0 0 9.2 10.4"><rect x="0" y="0" width="9.2" height="10.4" rx="1" fill="#C3D3FD"/><path d="M2.3 3 L4.5 5.2 L6.7 3" transform="translate(0.09999999999999964,1.2000000000000002)" fill="none" stroke="#4D6185" stroke-width="1.3"/></svg>
<div style="left:2px;top:484.90px;width:194px;height:0;border-top:0.8px dashed #D3CFBF"></div>
<div style="left:63.5px;top:472.5px;width:0.8px;height:13px;background:#D9D5C4"></div>
<div class="t" style="left:13px;top:474.92px;font-size:8.0px;color:#111;transform:scaleX(0.8);transform-origin:0 0;">Date Opened</div>
<svg style="position:absolute;left:185px;top:473.8px" width="9.2" height="10.4" viewBox="0 0 9.2 10.4"><rect x="0" y="0" width="9.2" height="10.4" rx="1" fill="#C3D3FD"/><path d="M2.3 3 L4.5 5.2 L6.7 3" transform="translate(0.09999999999999964,1.2000000000000002)" fill="none" stroke="#4D6185" stroke-width="1.3"/></svg>
<div style="left:2px;top:497.9px;width:194px;height:1px;background:#C2BFB0"></div>
<div style="left:63.5px;top:485.5px;width:0.8px;height:13px;background:#D9D5C4"></div>
<div class="t" style="left:13px;top:487.92px;font-size:8.0px;color:#111;transform:scaleX(0.8);transform-origin:0 0;">Date Completed</div>
<svg style="position:absolute;left:185px;top:486.8px" width="9.2" height="10.4" viewBox="0 0 9.2 10.4"><rect x="0" y="0" width="9.2" height="10.4" rx="1" fill="#C3D3FD"/><path d="M2.3 3 L4.5 5.2 L6.7 3" transform="translate(0.09999999999999964,1.2000000000000002)" fill="none" stroke="#4D6185" stroke-width="1.3"/></svg>
<div style="left:60px;top:459.5px;width:3.5px;height:13px;background:#ECE9D8"></div>
<div style="left:65.2px;top:433.2px;width:125.8px;height:179.3px;background:#ECE9D8;border:0.9px solid #6F6D64;box-sizing:border-box"></div>
<div style="left:66.1px;top:434.1px;width:124px;height:17px;background:linear-gradient(#F8F7F2,#E6E3D4)"></div>
<svg style="position:absolute;left:69.5px;top:436.8px" width="10.5" height="10.5" viewBox="0 0 10.5 10.5"><g fill="#F2F4F6" stroke="#A9B0B8" stroke-width="0.8"><rect x="0.6" y="0.6" width="4" height="4" rx="0.6"/><rect x="5.9" y="0.6" width="4" height="4" rx="0.6"/><rect x="0.6" y="5.9" width="4" height="4" rx="0.6"/><rect x="5.9" y="5.9" width="4" height="4" rx="0.6"/></g></svg>
<svg style="position:absolute;left:84.8px;top:436.8px" width="10.5" height="10.5" viewBox="0 0 10.5 10.5"><g fill="#E6EEE6" stroke="#A9B0A9" stroke-width="0.8"><rect x="0.6" y="0.6" width="4" height="4" rx="0.6"/><rect x="5.9" y="0.6" width="4" height="4" rx="0.6"/><rect x="0.6" y="5.9" width="4" height="4" rx="0.6"/><rect x="5.9" y="5.9" width="4" height="4" rx="0.6"/></g><g fill="#4AA84A"><rect x="2.1" y="2.1" width="1" height="1"/><rect x="7.4" y="2.1" width="1" height="1"/><rect x="2.1" y="7.4" width="1" height="1"/><rect x="7.4" y="7.4" width="1" height="1"/></g></svg>
<div style="left:66.1px;top:451px;width:124px;height:134.5px;background:#FFFFFF"></div>
<div style="left:66.1px;top:451px;width:124px;height:0.8px;background:#C8C4B4"></div>
<div style="left:66.1px;top:585px;width:124px;height:0.8px;background:#C8C4B4"></div>
<svg style="position:absolute;left:68.1px;top:453.5px" width="9" height="9" viewBox="0 0 9 9"><defs><linearGradient id="grn2" x1="0" y1="0" x2="0" y2="1"><stop offset="0" stop-color="#7CD86A"/><stop offset="1" stop-color="#1E9A1E"/></linearGradient></defs><rect x="0" y="0" width="9" height="9" rx="1.4" fill="url(#grn2)"/><path d="M2.6 2.4 L4.5 4 L6.4 2.4 M2.6 5 L4.5 6.6 L6.4 5" fill="none" stroke="#E8FFE0" stroke-width="1"/></svg>
<svg style="position:absolute;left:79px;top:453.6px" width="9" height="9" viewBox="0 0 9 9"><defs><linearGradient id="cbg" x1="0" y1="0" x2="1" y2="1"><stop offset="0" stop-color="#DCDBD3"/><stop offset="1" stop-color="#FFFFFF"/></linearGradient></defs><rect x="0.5" y="0.5" width="8" height="8" rx="0.8" fill="url(#cbg)" stroke="#7F9DB9" stroke-width="1"/></svg>
<div class="t" style="left:90.2px;top:454.22px;font-size:8.0px;color:#111;transform:scaleX(0.82);transform-origin:0 0;">Lowest</div>
<svg style="position:absolute;left:68.1px;top:464.68px" width="9" height="9" viewBox="0 0 9 9"><defs><linearGradient id="grn1" x1="0" y1="0" x2="0" y2="1"><stop offset="0" stop-color="#7CD86A"/><stop offset="1" stop-color="#1E9A1E"/></linearGradient></defs><rect x="0" y="0" width="9" height="9" rx="1.4" fill="url(#grn1)"/><path d="M2.3 3.6 L4.5 5.7 L6.7 3.6" fill="none" stroke="#F0FFE8" stroke-width="1.3"/></svg>
<svg style="position:absolute;left:79px;top:464.78000000000003px" width="9" height="9" viewBox="0 0 9 9"><defs><linearGradient id="cbg" x1="0" y1="0" x2="1" y2="1"><stop offset="0" stop-color="#DCDBD3"/><stop offset="1" stop-color="#FFFFFF"/></linearGradient></defs><rect x="0.5" y="0.5" width="8" height="8" rx="0.8" fill="url(#cbg)" stroke="#7F9DB9" stroke-width="1"/></svg>
<div class="t" style="left:90.2px;top:465.40px;font-size:8.0px;color:#111;transform:scaleX(0.82);transform-origin:0 0;">Low</div>
<svg style="position:absolute;left:67.6px;top:475.46000000000004px" width="10" height="10" viewBox="0 0 10 10"><defs><radialGradient id="nrm" cx="0.4" cy="0.35" r="0.7"><stop offset="0" stop-color="#FFB060"/><stop offset="0.6" stop-color="#E8741A"/><stop offset="1" stop-color="#B84A08"/></radialGradient></defs><circle cx="5" cy="5" r="4.7" fill="url(#nrm)"/><circle cx="5" cy="5" r="1.9" fill="#FFF4E8"/></svg>
<svg style="position:absolute;left:79px;top:475.96000000000004px" width="9" height="9" viewBox="0 0 9 9"><defs><linearGradient id="cbg" x1="0" y1="0" x2="1" y2="1"><stop offset="0" stop-color="#DCDBD3"/><stop offset="1" stop-color="#FFFFFF"/></linearGradient></defs><rect x="0.5" y="0.5" width="8" height="8" rx="0.8" fill="url(#cbg)" stroke="#7F9DB9" stroke-width="1"/></svg>
<div style="left:89px;top:475.46000000000004px;width:39px;height:10.6px;background:#316AC5"></div>
<div class="t" style="left:90.2px;top:476.58px;font-size:8.0px;color:#FFFFFF;transform:scaleX(0.82);transform-origin:0 0;">Normal</div>
<svg style="position:absolute;left:68.1px;top:487.04px" width="9" height="9" viewBox="0 0 9 9"><defs><linearGradient id="red1" x1="0" y1="0" x2="0" y2="1"><stop offset="0" stop-color="#F2705A"/><stop offset="1" stop-color="#C02A18"/></linearGradient></defs><rect x="0" y="0" width="9" height="9" rx="1.4" fill="url(#red1)"/><path d="M2.3 5.6 L4.5 3.4 L6.7 5.6" fill="none" stroke="#FFF0E8" stroke-width="1.3"/></svg>
<svg style="position:absolute;left:79px;top:487.14000000000004px" width="9" height="9" viewBox="0 0 9 9"><defs><linearGradient id="cbg" x1="0" y1="0" x2="1" y2="1"><stop offset="0" stop-color="#DCDBD3"/><stop offset="1" stop-color="#FFFFFF"/></linearGradient></defs><rect x="0.5" y="0.5" width="8" height="8" rx="0.8" fill="url(#cbg)" stroke="#7F9DB9" stroke-width="1"/><path d="M2.2 4.6 L3.9 6.3 L6.9 2.8" fill="none" stroke="#21A121" stroke-width="1.5"/></svg>
<div class="t" style="left:90.2px;top:487.76px;font-size:8.0px;color:#111;transform:scaleX(0.82);transform-origin:0 0;">High</div>
<svg style="position:absolute;left:68.1px;top:498.22px" width="9" height="9" viewBox="0 0 9 9"><defs><linearGradient id="red2" x1="0" y1="0" x2="0" y2="1"><stop offset="0" stop-color="#F2705A"/><stop offset="1" stop-color="#C02A18"/></linearGradient></defs><rect x="0" y="0" width="9" height="9" rx="1.4" fill="url(#red2)"/><path d="M2.6 4 L4.5 2.4 L6.4 4 M2.6 6.6 L4.5 5 L6.4 6.6" fill="none" stroke="#FFF0E8" stroke-width="1"/></svg>
<svg style="position:absolute;left:79px;top:498.32000000000005px" width="9" height="9" viewBox="0 0 9 9"><defs><linearGradient id="cbg" x1="0" y1="0" x2="1" y2="1"><stop offset="0" stop-color="#DCDBD3"/><stop offset="1" stop-color="#FFFFFF"/></linearGradient></defs><rect x="0.5" y="0.5" width="8" height="8" rx="0.8" fill="url(#cbg)" stroke="#7F9DB9" stroke-width="1"/><path d="M2.2 4.6 L3.9 6.3 L6.9 2.8" fill="none" stroke="#21A121" stroke-width="1.5"/></svg>
<div class="t" style="left:90.2px;top:498.94px;font-size:8.0px;color:#111;transform:scaleX(0.82);transform-origin:0 0;">Highest</div>
<svg style="position:absolute;left:67.6px;top:509.2px" width="10" height="9" viewBox="0 0 10 9"><defs><linearGradient id="urg" x1="0" y1="0" x2="0" y2="1"><stop offset="0" stop-color="#FFE87A"/><stop offset="1" stop-color="#E8A818"/></linearGradient></defs><path d="M4.4 1 Q5 0.2 5.6 1 L9.6 8.2 Q9.8 8.9 9 8.9 L1 8.9 Q0.2 8.9 0.4 8.2 Z" fill="url(#urg)" stroke="#D09A20" stroke-width="0.5"/><rect x="4.45" y="3" width="1.1" height="3.3" fill="#6A4A10"/><rect x="4.45" y="7" width="1.1" height="1" fill="#6A4A10"/></svg>
<svg style="position:absolute;left:79px;top:509.5px" width="9" height="9" viewBox="0 0 9 9"><defs><linearGradient id="cbg" x1="0" y1="0" x2="1" y2="1"><stop offset="0" stop-color="#DCDBD3"/><stop offset="1" stop-color="#FFFFFF"/></linearGradient></defs><rect x="0.5" y="0.5" width="8" height="8" rx="0.8" fill="url(#cbg)" stroke="#7F9DB9" stroke-width="1"/><path d="M2.2 4.6 L3.9 6.3 L6.9 2.8" fill="none" stroke="#21A121" stroke-width="1.5"/></svg>
<div class="t" style="left:90.2px;top:510.12px;font-size:8.0px;color:#111;transform:scaleX(0.82);transform-origin:0 0;">Urgent</div>
<div style="left:79.3px;top:592px;width:45.5px;height:14px;background:linear-gradient(#FFFFFF,#ECEBE6);border:0.8px solid #5A6478;box-sizing:border-box;border-radius:2px;box-shadow:inset 0 1.2px 0 0 #FCE0A8, inset 0 -1.4px 0 0 #F0B050, inset 1px 0 0 0 #F8CC80, inset -1px 0 0 0 #F8CC80"></div>
<svg style="position:absolute;left:91.5px;top:596px" width="9" height="7" viewBox="0 0 9 7"><path d="M0.8 3.5 L3.3 6 L8.3 0.8" fill="none" stroke="#2A9A3A" stroke-width="1.8"/></svg>
<div class="t" style="left:103.5px;top:595.40px;font-size:8.6px;color:#111;transform:scaleX(0.85);transform-origin:0 0;">Ok</div>
<div style="left:137px;top:592px;width:45.6px;height:14px;background:linear-gradient(#FFFFFF,#ECEBE6);border:0.8px solid #6C8AB0;box-sizing:border-box;border-radius:2px"></div>
<svg style="position:absolute;left:144px;top:595px" width="8.5" height="8.5" viewBox="0 0 8.5 8.5"><path d="M1 1 L7.5 7.5 M7.5 1 L1 7.5" stroke="#E02A1A" stroke-width="2.2"/></svg>
<div class="t" style="left:155.3px;top:595.40px;font-size:8.6px;color:#111;transform:scaleX(0.77);transform-origin:0 0;">Cancel</div>
<div style="left:108.2px;top:605.2px;width:12.3px;height:12px;background:#FFFFE1;border:0.7px solid #76766A;box-sizing:border-box;box-shadow:1.5px 1.5px 1px rgba(0,0,0,0.25)"></div>
<div class="t" style="left:109.6px;top:607.55px;font-size:8.2px;color:#111;transform:scaleX(0.8);transform-origin:0 0;">Ok</div>
<div style="left:0px;top:625.6px;width:800px;height:14.4px;background:linear-gradient(#D9D6CA 0px,#E6E3D8 2px,#EEEBE2 6px,#EDEAE0 14px)"></div>
<div style="left:0px;top:625.2px;width:197px;height:1px;background:#C2BFB2"></div>
<div style="left:196.8px;top:48.5px;width:603.2px;height:578px;background:#ECE9D8"></div>
<div style="left:197.3px;top:48.5px;width:1.6px;height:578px;background:#B9C1CF"></div>
<div style="left:798.5px;top:48.5px;width:1.5px;height:578px;background:#C9D1E0"></div>
<div style="left:197.3px;top:625.8px;width:602.7px;height:1.2px;background:#BFC6D4"></div>
<div style="left:198.9px;top:48.7px;width:589.3px;height:22px;background:#ACA899"></div>
<div style="left:202px;top:54.4px;width:43.6px;height:11.2px;background:linear-gradient(#F2F1EA,#E4E1D3);border:0.6px solid #CFCBBB;box-sizing:border-box;border-radius:1.5px"></div>
<div class="t" style="left:204px;top:56.92px;font-size:8.0px;color:#222;transform:scaleX(0.82);transform-origin:0 0;">Category</div>
<svg style="position:absolute;left:236.5px;top:57.8px" width="5" height="5" viewBox="0 0 5 5"><path d="M2.5 0.6 L4.4 4.2 L0.6 4.2 Z" fill="none" stroke="#B9B6A8" stroke-width="0.7"/></svg>
<div style="left:198.9px;top:70.7px;width:589px;height:11.6px;background:linear-gradient(#F2F1EA,#E8E6D8)"></div>
<div style="left:198.9px;top:81.6px;width:589px;height:0.9px;background:#D4D0C0"></div>
<div style="left:207.6px;top:72.5px;width:0.8px;height:8.5px;background:#D6D3C4"></div>
<div style="left:241.6px;top:72.5px;width:0.8px;height:8.5px;background:#D6D3C4"></div>
<div style="left:552.1px;top:72.5px;width:0.8px;height:8.5px;background:#D6D3C4"></div>
<div style="left:619.8000000000001px;top:72.5px;width:0.8px;height:8.5px;background:#D6D3C4"></div>
<div style="left:677.0px;top:72.5px;width:0.8px;height:8.5px;background:#D6D3C4"></div>
<div style="left:721.6px;top:72.5px;width:0.8px;height:8.5px;background:#D6D3C4"></div>
<div class="t" style="left:225.0px;width:0;display:flex;justify-content:center;top:73.72px;font-size:8.0px;color:#222;"><span style="display:inline-block;transform:scaleX(0.82);transform-origin:50% 0">Done</span></div>
<div class="t" style="left:397.25px;width:0;display:flex;justify-content:center;top:73.72px;font-size:8.0px;color:#222;"><span style="display:inline-block;transform:scaleX(0.82);transform-origin:50% 0">Name</span></div>
<div class="t" style="left:581.35px;width:0;display:flex;justify-content:center;top:73.72px;font-size:8.0px;color:#222;"><span style="display:inline-block;transform:scaleX(0.82);transform-origin:50% 0">Priority</span></div>
<svg style="position:absolute;left:609.7px;top:73.6px" width="8.8" height="7.6" viewBox="0 0 8.8 7.6"><rect x="0" y="0" width="8.8" height="7.6" rx="1" fill="#C3D3FD"/><path d="M2.3 3 L4.5 5.2 L6.7 3" transform="translate(-0.09999999999999964,-0.20000000000000018)" fill="none" stroke="#4D6185" stroke-width="1.3"/></svg>
<div class="t" style="left:643.8px;width:0;display:flex;justify-content:center;top:73.72px;font-size:8.0px;color:#222;"><span style="display:inline-block;transform:scaleX(0.82);transform-origin:50% 0">Status</span></div>
<svg style="position:absolute;left:667.7px;top:73.6px" width="8.5" height="7.6" viewBox="0 0 8.5 7.6"><rect x="0" y="0" width="8.5" height="7.6" rx="1" fill="#C3D3FD"/><path d="M2.3 3 L4.5 5.2 L6.7 3" transform="translate(-0.25,-0.20000000000000018)" fill="none" stroke="#4D6185" stroke-width="1.3"/></svg>
<div class="t" style="left:680.2px;top:73.72px;font-size:8.0px;color:#222;transform:scaleX(0.82);transform-origin:0 0;">Complete</div>
<svg style="position:absolute;left:713.5px;top:75.2px" width="5" height="5" viewBox="0 0 5 5"><path d="M2.5 0.6 L4.4 4.2 L0.6 4.2 Z" fill="none" stroke="#B9B6A8" stroke-width="0.7"/></svg>
<div style="left:722.5px;top:70.7px;width:54px;height:11px;overflow:hidden"><div class="t" style="left:-2.6px;top:3.4px;font-size:8px;color:#222;transform:scaleX(0.88);transform-origin:0 0">Date Last Modified</div></div>
<svg style="position:absolute;left:777.5px;top:73.6px" width="8.6" height="7.6" viewBox="0 0 8.6 7.6"><rect x="0" y="0" width="8.6" height="7.6" rx="1" fill="#C3D3FD"/><path d="M2.3 3 L4.5 5.2 L6.7 3" transform="translate(-0.20000000000000018,-0.20000000000000018)" fill="none" stroke="#4D6185" stroke-width="1.3"/></svg>
<div style="left:199px;top:82.3px;width:588.8px;height:518.3000000000001px;background:#ECE9D8"></div>
<div style="left:208px;top:82.3px;width:579.8px;height:518.3000000000001px;background:#FFFFFF"></div>
<div style="left:199px;top:600.6px;width:588.8px;height:9.699999999999932px;background:#FFFFFF"></div>
<div style="left:199px;top:179.35px;width:588.8px;height:11.25px;background:#ECE9D8"></div>
<div style="left:199px;top:273.1px;width:588.8px;height:11.25px;background:#ECE9D8"></div>
<div style="left:208px;top:96px;width:579.8px;height:1px;background:#D2CEC2"></div>
<div style="left:207.5px;top:83.1px;width:1px;height:13.75px;background:#D2CEC2"></div>
<div style="left:241.5px;top:83.1px;width:1px;height:13.75px;background:#D2CEC2"></div>
<div style="left:551.5px;top:83.1px;width:1px;height:13.75px;background:#D2CEC2"></div>
<div style="left:619.5px;top:83.1px;width:1px;height:13.75px;background:#D2CEC2"></div>
<div style="left:676.5px;top:83.1px;width:1px;height:13.75px;background:#D2CEC2"></div>
<div style="left:721.5px;top:83.1px;width:1px;height:13.75px;background:#D2CEC2"></div>
<div style="left:787.5px;top:83.1px;width:1px;height:13.75px;background:#D2CEC2"></div>
<div style="left:208px;top:110px;width:579.8px;height:1px;background:#D2CEC2"></div>
<div style="left:207.5px;top:96.85px;width:1px;height:13.75px;background:#D2CEC2"></div>
<div style="left:241.5px;top:96.85px;width:1px;height:13.75px;background:#D2CEC2"></div>
<div style="left:551.5px;top:96.85px;width:1px;height:13.75px;background:#D2CEC2"></div>
<div style="left:619.5px;top:96.85px;width:1px;height:13.75px;background:#D2CEC2"></div>
<div style="left:676.5px;top:96.85px;width:1px;height:13.75px;background:#D2CEC2"></div>
<div style="left:721.5px;top:96.85px;width:1px;height:13.75px;background:#D2CEC2"></div>
<div style="left:787.5px;top:96.85px;width:1px;height:13.75px;background:#D2CEC2"></div>
<div style="left:208px;top:124px;width:579.8px;height:1px;background:#D2CEC2"></div>
<div style="left:207.5px;top:110.6px;width:1px;height:13.75px;background:#D2CEC2"></div>
<div style="left:241.5px;top:110.6px;width:1px;height:13.75px;background:#D2CEC2"></div>
<div style="left:551.5px;top:110.6px;width:1px;height:13.75px;background:#D2CEC2"></div>
<div style="left:619.5px;top:110.6px;width:1px;height:13.75px;background:#D2CEC2"></div>
<div style="left:676.5px;top:110.6px;width:1px;height:13.75px;background:#D2CEC2"></div>
<div style="left:721.5px;top:110.6px;width:1px;height:13.75px;background:#D2CEC2"></div>
<div style="left:787.5px;top:110.6px;width:1px;height:13.75px;background:#D2CEC2"></div>
<div style="left:208px;top:138px;width:579.8px;height:1px;background:#D2CEC2"></div>
<div style="left:207.5px;top:124.35px;width:1px;height:13.75px;background:#D2CEC2"></div>
<div style="left:241.5px;top:124.35px;width:1px;height:13.75px;background:#D2CEC2"></div>
<div style="left:551.5px;top:124.35px;width:1px;height:13.75px;background:#D2CEC2"></div>
<div style="left:619.5px;top:124.35px;width:1px;height:13.75px;background:#D2CEC2"></div>
<div style="left:676.5px;top:124.35px;width:1px;height:13.75px;background:#D2CEC2"></div>
<div style="left:721.5px;top:124.35px;width:1px;height:13.75px;background:#D2CEC2"></div>
<div style="left:787.5px;top:124.35px;width:1px;height:13.75px;background:#D2CEC2"></div>
<div style="left:208px;top:151px;width:579.8px;height:1px;background:#D2CEC2"></div>
<div style="left:207.5px;top:138.1px;width:1px;height:13.75px;background:#D2CEC2"></div>
<div style="left:241.5px;top:138.1px;width:1px;height:13.75px;background:#D2CEC2"></div>
<div style="left:551.5px;top:138.1px;width:1px;height:13.75px;background:#D2CEC2"></div>
<div style="left:619.5px;top:138.1px;width:1px;height:13.75px;background:#D2CEC2"></div>
<div style="left:676.5px;top:138.1px;width:1px;height:13.75px;background:#D2CEC2"></div>
<div style="left:721.5px;top:138.1px;width:1px;height:13.75px;background:#D2CEC2"></div>
<div style="left:787.5px;top:138.1px;width:1px;height:13.75px;background:#D2CEC2"></div>
<div style="left:208px;top:165px;width:579.8px;height:1px;background:#D2CEC2"></div>
<div style="left:207.5px;top:151.85px;width:1px;height:13.75px;background:#D2CEC2"></div>
<div style="left:241.5px;top:151.85px;width:1px;height:13.75px;background:#D2CEC2"></div>
<div style="left:551.5px;top:151.85px;width:1px;height:13.75px;background:#D2CEC2"></div>
<div style="left:619.5px;top:151.85px;width:1px;height:13.75px;background:#D2CEC2"></div>
<div style="left:676.5px;top:151.85px;width:1px;height:13.75px;background:#D2CEC2"></div>
<div style="left:721.5px;top:151.85px;width:1px;height:13.75px;background:#D2CEC2"></div>
<div style="left:787.5px;top:151.85px;width:1px;height:13.75px;background:#D2CEC2"></div>
<div style="left:208px;top:179px;width:579.8px;height:1px;background:#D2CEC2"></div>
<div style="left:207.5px;top:165.6px;width:1px;height:13.75px;background:#D2CEC2"></div>
<div style="left:241.5px;top:165.6px;width:1px;height:13.75px;background:#D2CEC2"></div>
<div style="left:551.5px;top:165.6px;width:1px;height:13.75px;background:#D2CEC2"></div>
<div style="left:619.5px;top:165.6px;width:1px;height:13.75px;background:#D2CEC2"></div>
<div style="left:676.5px;top:165.6px;width:1px;height:13.75px;background:#D2CEC2"></div>
<div style="left:721.5px;top:165.6px;width:1px;height:13.75px;background:#D2CEC2"></div>
<div style="left:787.5px;top:165.6px;width:1px;height:13.75px;background:#D2CEC2"></div>
<div style="left:199px;top:190px;width:588.8px;height:1px;background:#D0CCBC"></div>
<div style="left:208px;top:204px;width:579.8px;height:1px;background:#D2CEC2"></div>
<div style="left:207.5px;top:190.6px;width:1px;height:13.75px;background:#D2CEC2"></div>
<div style="left:241.5px;top:190.6px;width:1px;height:13.75px;background:#D2CEC2"></div>
<div style="left:551.5px;top:190.6px;width:1px;height:13.75px;background:#D2CEC2"></div>
<div style="left:619.5px;top:190.6px;width:1px;height:13.75px;background:#D2CEC2"></div>
<div style="left:676.5px;top:190.6px;width:1px;height:13.75px;background:#D2CEC2"></div>
<div style="left:721.5px;top:190.6px;width:1px;height:13.75px;background:#D2CEC2"></div>
<div style="left:787.5px;top:190.6px;width:1px;height:13.75px;background:#D2CEC2"></div>
<div style="left:208px;top:218px;width:579.8px;height:1px;background:#D2CEC2"></div>
<div style="left:207.5px;top:204.35px;width:1px;height:13.75px;background:#D2CEC2"></div>
<div style="left:241.5px;top:204.35px;width:1px;height:13.75px;background:#D2CEC2"></div>
<div style="left:551.5px;top:204.35px;width:1px;height:13.75px;background:#D2CEC2"></div>
<div style="left:619.5px;top:204.35px;width:1px;height:13.75px;background:#D2CEC2"></div>
<div style="left:676.5px;top:204.35px;width:1px;height:13.75px;background:#D2CEC2"></div>
<div style="left:721.5px;top:204.35px;width:1px;height:13.75px;background:#D2CEC2"></div>
<div style="left:787.5px;top:204.35px;width:1px;height:13.75px;background:#D2CEC2"></div>
<div style="left:208px;top:231px;width:579.8px;height:1px;background:#D2CEC2"></div>
<div style="left:207.5px;top:218.1px;width:1px;height:13.75px;background:#D2CEC2"></div>
<div style="left:241.5px;top:218.1px;width:1px;height:13.75px;background:#D2CEC2"></div>
<div style="left:551.5px;top:218.1px;width:1px;height:13.75px;background:#D2CEC2"></div>
<div style="left:619.5px;top:218.1px;width:1px;height:13.75px;background:#D2CEC2"></div>
<div style="left:676.5px;top:218.1px;width:1px;height:13.75px;background:#D2CEC2"></div>
<div style="left:721.5px;top:218.1px;width:1px;height:13.75px;background:#D2CEC2"></div>
<div style="left:787.5px;top:218.1px;width:1px;height:13.75px;background:#D2CEC2"></div>
<div style="left:208px;top:245px;width:579.8px;height:1px;background:#D2CEC2"></div>
<div style="left:207.5px;top:231.85px;width:1px;height:13.75px;background:#D2CEC2"></div>
<div style="left:241.5px;top:231.85px;width:1px;height:13.75px;background:#D2CEC2"></div>
<div style="left:551.5px;top:231.85px;width:1px;height:13.75px;background:#D2CEC2"></div>
<div style="left:619.5px;top:231.85px;width:1px;height:13.75px;background:#D2CEC2"></div>
<div style="left:676.5px;top:231.85px;width:1px;height:13.75px;background:#D2CEC2"></div>
<div style="left:721.5px;top:231.85px;width:1px;height:13.75px;background:#D2CEC2"></div>
<div style="left:787.5px;top:231.85px;width:1px;height:13.75px;background:#D2CEC2"></div>
<div style="left:208px;top:259px;width:579.8px;height:1px;background:#D2CEC2"></div>
<div style="left:207.5px;top:245.6px;width:1px;height:13.75px;background:#D2CEC2"></div>
<div style="left:241.5px;top:245.6px;width:1px;height:13.75px;background:#D2CEC2"></div>
<div style="left:551.5px;top:245.6px;width:1px;height:13.75px;background:#D2CEC2"></div>
<div style="left:619.5px;top:245.6px;width:1px;height:13.75px;background:#D2CEC2"></div>
<div style="left:676.5px;top:245.6px;width:1px;height:13.75px;background:#D2CEC2"></div>
<div style="left:721.5px;top:245.6px;width:1px;height:13.75px;background:#D2CEC2"></div>
<div style="left:787.5px;top:245.6px;width:1px;height:13.75px;background:#D2CEC2"></div>
<div style="left:208px;top:273px;width:579.8px;height:1px;background:#D2CEC2"></div>
<div style="left:207.5px;top:259.35px;width:1px;height:13.75px;background:#D2CEC2"></div>
<div style="left:241.5px;top:259.35px;width:1px;height:13.75px;background:#D2CEC2"></div>
<div style="left:551.5px;top:259.35px;width:1px;height:13.75px;background:#D2CEC2"></div>
<div style="left:619.5px;top:259.35px;width:1px;height:13.75px;background:#D2CEC2"></div>
<div style="left:676.5px;top:259.35px;width:1px;height:13.75px;background:#D2CEC2"></div>
<div style="left:721.5px;top:259.35px;width:1px;height:13.75px;background:#D2CEC2"></div>
<div style="left:787.5px;top:259.35px;width:1px;height:13.75px;background:#D2CEC2"></div>
<div style="left:199px;top:284px;width:588.8px;height:1px;background:#D0CCBC"></div>
<div style="left:208px;top:298px;width:579.8px;height:1px;background:#D2CEC2"></div>
<div style="left:207.5px;top:284.35px;width:1px;height:13.75px;background:#D2CEC2"></div>
<div style="left:241.5px;top:284.35px;width:1px;height:13.75px;background:#D2CEC2"></div>
<div style="left:551.5px;top:284.35px;width:1px;height:13.75px;background:#D2CEC2"></div>
<div style="left:619.5px;top:284.35px;width:1px;height:13.75px;background:#D2CEC2"></div>
<div style="left:676.5px;top:284.35px;width:1px;height:13.75px;background:#D2CEC2"></div>
<div style="left:721.5px;top:284.35px;width:1px;height:13.75px;background:#D2CEC2"></div>
<div style="left:787.5px;top:284.35px;width:1px;height:13.75px;background:#D2CEC2"></div>
<div style="left:208px;top:311px;width:579.8px;height:1px;background:#D2CEC2"></div>
<div style="left:207.5px;top:298.1px;width:1px;height:13.75px;background:#D2CEC2"></div>
<div style="left:241.5px;top:298.1px;width:1px;height:13.75px;background:#D2CEC2"></div>
<div style="left:551.5px;top:298.1px;width:1px;height:13.75px;background:#D2CEC2"></div>
<div style="left:619.5px;top:298.1px;width:1px;height:13.75px;background:#D2CEC2"></div>
<div style="left:676.5px;top:298.1px;width:1px;height:13.75px;background:#D2CEC2"></div>
<div style="left:721.5px;top:298.1px;width:1px;height:13.75px;background:#D2CEC2"></div>
<div style="left:787.5px;top:298.1px;width:1px;height:13.75px;background:#D2CEC2"></div>
<div style="left:208px;top:325px;width:579.8px;height:1px;background:#D2CEC2"></div>
<div style="left:207.5px;top:311.85px;width:1px;height:13.75px;background:#D2CEC2"></div>
<div style="left:241.5px;top:311.85px;width:1px;height:13.75px;background:#D2CEC2"></div>
<div style="left:551.5px;top:311.85px;width:1px;height:13.75px;background:#D2CEC2"></div>
<div style="left:619.5px;top:311.85px;width:1px;height:13.75px;background:#D2CEC2"></div>
<div style="left:676.5px;top:311.85px;width:1px;height:13.75px;background:#D2CEC2"></div>
<div style="left:721.5px;top:311.85px;width:1px;height:13.75px;background:#D2CEC2"></div>
<div style="left:787.5px;top:311.85px;width:1px;height:13.75px;background:#D2CEC2"></div>
<div style="left:208px;top:339px;width:579.8px;height:1px;background:#D2CEC2"></div>
<div style="left:207.5px;top:325.6px;width:1px;height:13.75px;background:#D2CEC2"></div>
<div style="left:241.5px;top:325.6px;width:1px;height:13.75px;background:#D2CEC2"></div>
<div style="left:551.5px;top:325.6px;width:1px;height:13.75px;background:#D2CEC2"></div>
<div style="left:619.5px;top:325.6px;width:1px;height:13.75px;background:#D2CEC2"></div>
<div style="left:676.5px;top:325.6px;width:1px;height:13.75px;background:#D2CEC2"></div>
<div style="left:721.5px;top:325.6px;width:1px;height:13.75px;background:#D2CEC2"></div>
<div style="left:787.5px;top:325.6px;width:1px;height:13.75px;background:#D2CEC2"></div>
<div style="left:208px;top:353px;width:579.8px;height:1px;background:#D2CEC2"></div>
<div style="left:207.5px;top:339.35px;width:1px;height:13.75px;background:#D2CEC2"></div>
<div style="left:241.5px;top:339.35px;width:1px;height:13.75px;background:#D2CEC2"></div>
<div style="left:551.5px;top:339.35px;width:1px;height:13.75px;background:#D2CEC2"></div>
<div style="left:619.5px;top:339.35px;width:1px;height:13.75px;background:#D2CEC2"></div>
<div style="left:676.5px;top:339.35px;width:1px;height:13.75px;background:#D2CEC2"></div>
<div style="left:721.5px;top:339.35px;width:1px;height:13.75px;background:#D2CEC2"></div>
<div style="left:787.5px;top:339.35px;width:1px;height:13.75px;background:#D2CEC2"></div>
<div style="left:208px;top:366px;width:579.8px;height:1px;background:#D2CEC2"></div>
<div style="left:207.5px;top:353.1px;width:1px;height:13.75px;background:#D2CEC2"></div>
<div style="left:241.5px;top:353.1px;width:1px;height:13.75px;background:#D2CEC2"></div>
<div style="left:551.5px;top:353.1px;width:1px;height:13.75px;background:#D2CEC2"></div>
<div style="left:619.5px;top:353.1px;width:1px;height:13.75px;background:#D2CEC2"></div>
<div style="left:676.5px;top:353.1px;width:1px;height:13.75px;background:#D2CEC2"></div>
<div style="left:721.5px;top:353.1px;width:1px;height:13.75px;background:#D2CEC2"></div>
<div style="left:787.5px;top:353.1px;width:1px;height:13.75px;background:#D2CEC2"></div>
<div style="left:208px;top:380px;width:579.8px;height:1px;background:#D2CEC2"></div>
<div style="left:207.5px;top:366.85px;width:1px;height:13.75px;background:#D2CEC2"></div>
<div style="left:241.5px;top:366.85px;width:1px;height:13.75px;background:#D2CEC2"></div>
<div style="left:551.5px;top:366.85px;width:1px;height:13.75px;background:#D2CEC2"></div>
<div style="left:619.5px;top:366.85px;width:1px;height:13.75px;background:#D2CEC2"></div>
<div style="left:676.5px;top:366.85px;width:1px;height:13.75px;background:#D2CEC2"></div>
<div style="left:721.5px;top:366.85px;width:1px;height:13.75px;background:#D2CEC2"></div>
<div style="left:787.5px;top:366.85px;width:1px;height:13.75px;background:#D2CEC2"></div>
<div style="left:208px;top:394px;width:579.8px;height:1px;background:#D2CEC2"></div>
<div style="left:207.5px;top:380.6px;width:1px;height:13.75px;background:#D2CEC2"></div>
<div style="left:241.5px;top:380.6px;width:1px;height:13.75px;background:#D2CEC2"></div>
<div style="left:551.5px;top:380.6px;width:1px;height:13.75px;background:#D2CEC2"></div>
<div style="left:619.5px;top:380.6px;width:1px;height:13.75px;background:#D2CEC2"></div>
<div style="left:676.5px;top:380.6px;width:1px;height:13.75px;background:#D2CEC2"></div>
<div style="left:721.5px;top:380.6px;width:1px;height:13.75px;background:#D2CEC2"></div>
<div style="left:787.5px;top:380.6px;width:1px;height:13.75px;background:#D2CEC2"></div>
<div style="left:208px;top:408px;width:579.8px;height:1px;background:#D2CEC2"></div>
<div style="left:207.5px;top:394.35px;width:1px;height:13.75px;background:#D2CEC2"></div>
<div style="left:241.5px;top:394.35px;width:1px;height:13.75px;background:#D2CEC2"></div>
<div style="left:551.5px;top:394.35px;width:1px;height:13.75px;background:#D2CEC2"></div>
<div style="left:619.5px;top:394.35px;width:1px;height:13.75px;background:#D2CEC2"></div>
<div style="left:676.5px;top:394.35px;width:1px;height:13.75px;background:#D2CEC2"></div>
<div style="left:721.5px;top:394.35px;width:1px;height:13.75px;background:#D2CEC2"></div>
<div style="left:787.5px;top:394.35px;width:1px;height:13.75px;background:#D2CEC2"></div>
<div style="left:208px;top:421px;width:579.8px;height:1px;background:#D2CEC2"></div>
<div style="left:207.5px;top:408.1px;width:1px;height:13.75px;background:#D2CEC2"></div>
<div style="left:241.5px;top:408.1px;width:1px;height:13.75px;background:#D2CEC2"></div>
<div style="left:551.5px;top:408.1px;width:1px;height:13.75px;background:#D2CEC2"></div>
<div style="left:619.5px;top:408.1px;width:1px;height:13.75px;background:#D2CEC2"></div>
<div style="left:676.5px;top:408.1px;width:1px;height:13.75px;background:#D2CEC2"></div>
<div style="left:721.5px;top:408.1px;width:1px;height:13.75px;background:#D2CEC2"></div>
<div style="left:787.5px;top:408.1px;width:1px;height:13.75px;background:#D2CEC2"></div>
<div style="left:208px;top:435px;width:579.8px;height:1px;background:#D2CEC2"></div>
<div style="left:207.5px;top:421.85px;width:1px;height:13.75px;background:#D2CEC2"></div>
<div style="left:241.5px;top:421.85px;width:1px;height:13.75px;background:#D2CEC2"></div>
<div style="left:551.5px;top:421.85px;width:1px;height:13.75px;background:#D2CEC2"></div>
<div style="left:619.5px;top:421.85px;width:1px;height:13.75px;background:#D2CEC2"></div>
<div style="left:676.5px;top:421.85px;width:1px;height:13.75px;background:#D2CEC2"></div>
<div style="left:721.5px;top:421.85px;width:1px;height:13.75px;background:#D2CEC2"></div>
<div style="left:787.5px;top:421.85px;width:1px;height:13.75px;background:#D2CEC2"></div>
<div style="left:208px;top:449px;width:579.8px;height:1px;background:#D2CEC2"></div>
<div style="left:207.5px;top:435.6px;width:1px;height:13.75px;background:#D2CEC2"></div>
<div style="left:241.5px;top:435.6px;width:1px;height:13.75px;background:#D2CEC2"></div>
<div style="left:551.5px;top:435.6px;width:1px;height:13.75px;background:#D2CEC2"></div>
<div style="left:619.5px;top:435.6px;width:1px;height:13.75px;background:#D2CEC2"></div>
<div style="left:676.5px;top:435.6px;width:1px;height:13.75px;background:#D2CEC2"></div>
<div style="left:721.5px;top:435.6px;width:1px;height:13.75px;background:#D2CEC2"></div>
<div style="left:787.5px;top:435.6px;width:1px;height:13.75px;background:#D2CEC2"></div>
<div style="left:208px;top:463px;width:579.8px;height:1px;background:#D2CEC2"></div>
<div style="left:207.5px;top:449.35px;width:1px;height:13.75px;background:#D2CEC2"></div>
<div style="left:241.5px;top:449.35px;width:1px;height:13.75px;background:#D2CEC2"></div>
<div style="left:551.5px;top:449.35px;width:1px;height:13.75px;background:#D2CEC2"></div>
<div style="left:619.5px;top:449.35px;width:1px;height:13.75px;background:#D2CEC2"></div>
<div style="left:676.5px;top:449.35px;width:1px;height:13.75px;background:#D2CEC2"></div>
<div style="left:721.5px;top:449.35px;width:1px;height:13.75px;background:#D2CEC2"></div>
<div style="left:787.5px;top:449.35px;width:1px;height:13.75px;background:#D2CEC2"></div>
<div style="left:208px;top:476px;width:579.8px;height:1px;background:#D2CEC2"></div>
<div style="left:207.5px;top:463.1px;width:1px;height:13.75px;background:#D2CEC2"></div>
<div style="left:241.5px;top:463.1px;width:1px;height:13.75px;background:#D2CEC2"></div>
<div style="left:551.5px;top:463.1px;width:1px;height:13.75px;background:#D2CEC2"></div>
<div style="left:619.5px;top:463.1px;width:1px;height:13.75px;background:#D2CEC2"></div>
<div style="left:676.5px;top:463.1px;width:1px;height:13.75px;background:#D2CEC2"></div>
<div style="left:721.5px;top:463.1px;width:1px;height:13.75px;background:#D2CEC2"></div>
<div style="left:787.5px;top:463.1px;width:1px;height:13.75px;background:#D2CEC2"></div>
<div style="left:208px;top:490px;width:579.8px;height:1px;background:#D2CEC2"></div>
<div style="left:207.5px;top:476.85px;width:1px;height:13.75px;background:#D2CEC2"></div>
<div style="left:241.5px;top:476.85px;width:1px;height:13.75px;background:#D2CEC2"></div>
<div style="left:551.5px;top:476.85px;width:1px;height:13.75px;background:#D2CEC2"></div>
<div style="left:619.5px;top:476.85px;width:1px;height:13.75px;background:#D2CEC2"></div>
<div style="left:676.5px;top:476.85px;width:1px;height:13.75px;background:#D2CEC2"></div>
<div style="left:721.5px;top:476.85px;width:1px;height:13.75px;background:#D2CEC2"></div>
<div style="left:787.5px;top:476.85px;width:1px;height:13.75px;background:#D2CEC2"></div>
<div style="left:208px;top:504px;width:579.8px;height:1px;background:#D2CEC2"></div>
<div style="left:207.5px;top:490.6px;width:1px;height:13.75px;background:#D2CEC2"></div>
<div style="left:241.5px;top:490.6px;width:1px;height:13.75px;background:#D2CEC2"></div>
<div style="left:551.5px;top:490.6px;width:1px;height:13.75px;background:#D2CEC2"></div>
<div style="left:619.5px;top:490.6px;width:1px;height:13.75px;background:#D2CEC2"></div>
<div style="left:676.5px;top:490.6px;width:1px;height:13.75px;background:#D2CEC2"></div>
<div style="left:721.5px;top:490.6px;width:1px;height:13.75px;background:#D2CEC2"></div>
<div style="left:787.5px;top:490.6px;width:1px;height:13.75px;background:#D2CEC2"></div>
<div style="left:208px;top:518px;width:579.8px;height:1px;background:#D2CEC2"></div>
<div style="left:207.5px;top:504.35px;width:1px;height:13.75px;background:#D2CEC2"></div>
<div style="left:241.5px;top:504.35px;width:1px;height:13.75px;background:#D2CEC2"></div>
<div style="left:551.5px;top:504.35px;width:1px;height:13.75px;background:#D2CEC2"></div>
<div style="left:619.5px;top:504.35px;width:1px;height:13.75px;background:#D2CEC2"></div>
<div style="left:676.5px;top:504.35px;width:1px;height:13.75px;background:#D2CEC2"></div>
<div style="left:721.5px;top:504.35px;width:1px;height:13.75px;background:#D2CEC2"></div>
<div style="left:787.5px;top:504.35px;width:1px;height:13.75px;background:#D2CEC2"></div>
<div style="left:208px;top:531px;width:579.8px;height:1px;background:#D2CEC2"></div>
<div style="left:207.5px;top:518.1px;width:1px;height:13.75px;background:#D2CEC2"></div>
<div style="left:241.5px;top:518.1px;width:1px;height:13.75px;background:#D2CEC2"></div>
<div style="left:551.5px;top:518.1px;width:1px;height:13.75px;background:#D2CEC2"></div>
<div style="left:619.5px;top:518.1px;width:1px;height:13.75px;background:#D2CEC2"></div>
<div style="left:676.5px;top:518.1px;width:1px;height:13.75px;background:#D2CEC2"></div>
<div style="left:721.5px;top:518.1px;width:1px;height:13.75px;background:#D2CEC2"></div>
<div style="left:787.5px;top:518.1px;width:1px;height:13.75px;background:#D2CEC2"></div>
<div style="left:208px;top:545px;width:579.8px;height:1px;background:#D2CEC2"></div>
<div style="left:207.5px;top:531.85px;width:1px;height:13.75px;background:#D2CEC2"></div>
<div style="left:241.5px;top:531.85px;width:1px;height:13.75px;background:#D2CEC2"></div>
<div style="left:551.5px;top:531.85px;width:1px;height:13.75px;background:#D2CEC2"></div>
<div style="left:619.5px;top:531.85px;width:1px;height:13.75px;background:#D2CEC2"></div>
<div style="left:676.5px;top:531.85px;width:1px;height:13.75px;background:#D2CEC2"></div>
<div style="left:721.5px;top:531.85px;width:1px;height:13.75px;background:#D2CEC2"></div>
<div style="left:787.5px;top:531.85px;width:1px;height:13.75px;background:#D2CEC2"></div>
<div style="left:208px;top:559px;width:579.8px;height:1px;background:#D2CEC2"></div>
<div style="left:207.5px;top:545.6px;width:1px;height:13.75px;background:#D2CEC2"></div>
<div style="left:241.5px;top:545.6px;width:1px;height:13.75px;background:#D2CEC2"></div>
<div style="left:551.5px;top:545.6px;width:1px;height:13.75px;background:#D2CEC2"></div>
<div style="left:619.5px;top:545.6px;width:1px;height:13.75px;background:#D2CEC2"></div>
<div style="left:676.5px;top:545.6px;width:1px;height:13.75px;background:#D2CEC2"></div>
<div style="left:721.5px;top:545.6px;width:1px;height:13.75px;background:#D2CEC2"></div>
<div style="left:787.5px;top:545.6px;width:1px;height:13.75px;background:#D2CEC2"></div>
<div style="left:208px;top:573px;width:579.8px;height:1px;background:#D2CEC2"></div>
<div style="left:207.5px;top:559.35px;width:1px;height:13.75px;background:#D2CEC2"></div>
<div style="left:241.5px;top:559.35px;width:1px;height:13.75px;background:#D2CEC2"></div>
<div style="left:551.5px;top:559.35px;width:1px;height:13.75px;background:#D2CEC2"></div>
<div style="left:619.5px;top:559.35px;width:1px;height:13.75px;background:#D2CEC2"></div>
<div style="left:676.5px;top:559.35px;width:1px;height:13.75px;background:#D2CEC2"></div>
<div style="left:721.5px;top:559.35px;width:1px;height:13.75px;background:#D2CEC2"></div>
<div style="left:787.5px;top:559.35px;width:1px;height:13.75px;background:#D2CEC2"></div>
<div style="left:208px;top:586px;width:579.8px;height:1px;background:#D2CEC2"></div>
<div style="left:207.5px;top:573.1px;width:1px;height:13.75px;background:#D2CEC2"></div>
<div style="left:241.5px;top:573.1px;width:1px;height:13.75px;background:#D2CEC2"></div>
<div style="left:551.5px;top:573.1px;width:1px;height:13.75px;background:#D2CEC2"></div>
<div style="left:619.5px;top:573.1px;width:1px;height:13.75px;background:#D2CEC2"></div>
<div style="left:676.5px;top:573.1px;width:1px;height:13.75px;background:#D2CEC2"></div>
<div style="left:721.5px;top:573.1px;width:1px;height:13.75px;background:#D2CEC2"></div>
<div style="left:787.5px;top:573.1px;width:1px;height:13.75px;background:#D2CEC2"></div>
<div style="left:208px;top:600px;width:579.8px;height:1px;background:#D2CEC2"></div>
<div style="left:207.5px;top:586.85px;width:1px;height:13.75px;background:#D2CEC2"></div>
<div style="left:241.5px;top:586.85px;width:1px;height:13.75px;background:#D2CEC2"></div>
<div style="left:551.5px;top:586.85px;width:1px;height:13.75px;background:#D2CEC2"></div>
<div style="left:619.5px;top:586.85px;width:1px;height:13.75px;background:#D2CEC2"></div>
<div style="left:676.5px;top:586.85px;width:1px;height:13.75px;background:#D2CEC2"></div>
<div style="left:721.5px;top:586.85px;width:1px;height:13.75px;background:#D2CEC2"></div>
<div style="left:787.5px;top:586.85px;width:1px;height:13.75px;background:#D2CEC2"></div>
<svg style="position:absolute;left:220.3px;top:85.57499999999999px" width="9" height="9" viewBox="0 0 9 9"><defs><linearGradient id="cbg" x1="0" y1="0" x2="1" y2="1"><stop offset="0" stop-color="#DCDBD3"/><stop offset="1" stop-color="#FFFFFF"/></linearGradient></defs><rect x="0.5" y="0.5" width="8" height="8" rx="0.8" fill="url(#cbg)" stroke="#7F9DB9" stroke-width="1"/></svg>
<div class="t" style="left:244.2px;top:86.25px;font-size:8.0px;color:#111;transform:scaleX(0.845);transform-origin:0 0;">1.4 Insurance company should guarantee advice, information and quality service in the case of loss</div>
<svg style="position:absolute;left:555.3px;top:85.375px" width="9" height="9" viewBox="0 0 9 9"><defs><linearGradient id="grn1" x1="0" y1="0" x2="0" y2="1"><stop offset="0" stop-color="#7CD86A"/><stop offset="1" stop-color="#1E9A1E"/></linearGradient></defs><rect x="0" y="0" width="9" height="9" rx="1.4" fill="url(#grn1)"/><path d="M2.3 3.6 L4.5 5.7 L6.7 3.6" fill="none" stroke="#F0FFE8" stroke-width="1.3"/></svg>
<div class="t" style="left:567px;top:86.25px;font-size:8.0px;color:#111;transform:scaleX(0.82);transform-origin:0 0;">Low</div>
<svg style="position:absolute;left:624px;top:84.675px" width="8" height="11" viewBox="0 0 8 11"><defs><linearGradient id="docg" x1="0" y1="0" x2="1" y2="1"><stop offset="0" stop-color="#FFFFFF"/><stop offset="1" stop-color="#C9DBF2"/></linearGradient></defs><path d="M0.5 0.5 L5 0.5 L7.5 3 L7.5 10.5 L0.5 10.5 Z" fill="url(#docg)" stroke="#8AA6CF" stroke-width="0.8"/><path d="M5 0.5 L5 3 L7.5 3" fill="#E8F0FA" stroke="#8AA6CF" stroke-width="0.7"/></svg>
<div class="t" style="left:634.9px;top:86.25px;font-size:8.0px;color:#111;transform:scaleX(0.82);transform-origin:0 0;">Created</div>
<div class="t" style="left:699.7px;width:0;display:flex;justify-content:center;top:86.25px;font-size:8.0px;color:#111;"><span style="display:inline-block;transform:scaleX(0.82);transform-origin:50% 0">0 %</span></div>
<div class="t" style="left:727.0px;top:86.44px;font-size:8.0px;color:#111;transform:scaleX(0.873);transform-origin:0 0;">30.09.2008 17:38</div>
<svg style="position:absolute;left:220.3px;top:99.32499999999999px" width="9" height="9" viewBox="0 0 9 9"><defs><linearGradient id="cbg" x1="0" y1="0" x2="1" y2="1"><stop offset="0" stop-color="#DCDBD3"/><stop offset="1" stop-color="#FFFFFF"/></linearGradient></defs><rect x="0.5" y="0.5" width="8" height="8" rx="0.8" fill="url(#cbg)" stroke="#7F9DB9" stroke-width="1"/></svg>
<div class="t" style="left:244.2px;top:100.00px;font-size:8.0px;color:#111;transform:scaleX(0.845);transform-origin:0 0;">1.5.  Grouping business needs to be insured</div>
<svg style="position:absolute;left:555.0px;top:98.625px" width="10" height="10" viewBox="0 0 10 10"><defs><radialGradient id="nrm" cx="0.4" cy="0.35" r="0.7"><stop offset="0" stop-color="#FFB060"/><stop offset="0.6" stop-color="#E8741A"/><stop offset="1" stop-color="#B84A08"/></radialGradient></defs><circle cx="5" cy="5" r="4.7" fill="url(#nrm)"/><circle cx="5" cy="5" r="1.9" fill="#FFF4E8"/></svg>
<div class="t" style="left:567px;top:100.00px;font-size:8.0px;color:#111;transform:scaleX(0.82);transform-origin:0 0;">Normal</div>
<svg style="position:absolute;left:624px;top:98.425px" width="8" height="11" viewBox="0 0 8 11"><defs><linearGradient id="docg" x1="0" y1="0" x2="1" y2="1"><stop offset="0" stop-color="#FFFFFF"/><stop offset="1" stop-color="#C9DBF2"/></linearGradient></defs><path d="M0.5 0.5 L5 0.5 L7.5 3 L7.5 10.5 L0.5 10.5 Z" fill="url(#docg)" stroke="#8AA6CF" stroke-width="0.8"/><path d="M5 0.5 L5 3 L7.5 3" fill="#E8F0FA" stroke="#8AA6CF" stroke-width="0.7"/></svg>
<div class="t" style="left:634.9px;top:100.00px;font-size:8.0px;color:#111;transform:scaleX(0.82);transform-origin:0 0;">Created</div>
<div class="t" style="left:699.7px;width:0;display:flex;justify-content:center;top:100.00px;font-size:8.0px;color:#111;"><span style="display:inline-block;transform:scaleX(0.82);transform-origin:50% 0">0 %</span></div>
<div class="t" style="left:727.0px;top:100.19px;font-size:8.0px;color:#111;transform:scaleX(0.873);transform-origin:0 0;">30.09.2008 17:33</div>
<svg style="position:absolute;left:220.3px;top:113.07499999999999px" width="9" height="9" viewBox="0 0 9 9"><defs><linearGradient id="cbg" x1="0" y1="0" x2="1" y2="1"><stop offset="0" stop-color="#DCDBD3"/><stop offset="1" stop-color="#FFFFFF"/></linearGradient></defs><rect x="0.5" y="0.5" width="8" height="8" rx="0.8" fill="url(#cbg)" stroke="#7F9DB9" stroke-width="1"/></svg>
<div class="t" style="left:244.2px;top:113.75px;font-size:8.0px;color:#111;transform:scaleX(0.845);transform-origin:0 0;">1.6 Workers&#x27; compensation insurance</div>
<svg style="position:absolute;left:555.0px;top:112.375px" width="10" height="10" viewBox="0 0 10 10"><defs><radialGradient id="nrm" cx="0.4" cy="0.35" r="0.7"><stop offset="0" stop-color="#FFB060"/><stop offset="0.6" stop-color="#E8741A"/><stop offset="1" stop-color="#B84A08"/></radialGradient></defs><circle cx="5" cy="5" r="4.7" fill="url(#nrm)"/><circle cx="5" cy="5" r="1.9" fill="#FFF4E8"/></svg>
<div class="t" style="left:567px;top:113.75px;font-size:8.0px;color:#111;transform:scaleX(0.82);transform-origin:0 0;">Normal</div>
<svg style="position:absolute;left:624px;top:112.175px" width="8" height="11" viewBox="0 0 8 11"><defs><linearGradient id="docg" x1="0" y1="0" x2="1" y2="1"><stop offset="0" stop-color="#FFFFFF"/><stop offset="1" stop-color="#C9DBF2"/></linearGradient></defs><path d="M0.5 0.5 L5 0.5 L7.5 3 L7.5 10.5 L0.5 10.5 Z" fill="url(#docg)" stroke="#8AA6CF" stroke-width="0.8"/><path d="M5 0.5 L5 3 L7.5 3" fill="#E8F0FA" stroke="#8AA6CF" stroke-width="0.7"/></svg>
<div class="t" style="left:634.9px;top:113.75px;font-size:8.0px;color:#111;transform:scaleX(0.82);transform-origin:0 0;">Created</div>
<div class="t" style="left:699.7px;width:0;display:flex;justify-content:center;top:113.75px;font-size:8.0px;color:#111;"><span style="display:inline-block;transform:scaleX(0.82);transform-origin:50% 0">0 %</span></div>
<div class="t" style="left:727.0px;top:113.94px;font-size:8.0px;color:#111;transform:scaleX(0.873);transform-origin:0 0;">30.09.2008 17:33</div>
<svg style="position:absolute;left:220.3px;top:126.82499999999999px" width="9" height="9" viewBox="0 0 9 9"><defs><linearGradient id="cbg" x1="0" y1="0" x2="1" y2="1"><stop offset="0" stop-color="#DCDBD3"/><stop offset="1" stop-color="#FFFFFF"/></linearGradient></defs><rect x="0.5" y="0.5" width="8" height="8" rx="0.8" fill="url(#cbg)" stroke="#7F9DB9" stroke-width="1"/></svg>
<div class="t" style="left:244.2px;top:127.50px;font-size:8.0px;color:#111;transform:scaleX(0.845);transform-origin:0 0;">1.7 Property insurance</div>
<svg style="position:absolute;left:555.0px;top:126.125px" width="10" height="10" viewBox="0 0 10 10"><defs><radialGradient id="nrm" cx="0.4" cy="0.35" r="0.7"><stop offset="0" stop-color="#FFB060"/><stop offset="0.6" stop-color="#E8741A"/><stop offset="1" stop-color="#B84A08"/></radialGradient></defs><circle cx="5" cy="5" r="4.7" fill="url(#nrm)"/><circle cx="5" cy="5" r="1.9" fill="#FFF4E8"/></svg>
<div class="t" style="left:567px;top:127.50px;font-size:8.0px;color:#111;transform:scaleX(0.82);transform-origin:0 0;">Normal</div>
<svg style="position:absolute;left:624px;top:125.925px" width="8" height="11" viewBox="0 0 8 11"><defs><linearGradient id="docg" x1="0" y1="0" x2="1" y2="1"><stop offset="0" stop-color="#FFFFFF"/><stop offset="1" stop-color="#C9DBF2"/></linearGradient></defs><path d="M0.5 0.5 L5 0.5 L7.5 3 L7.5 10.5 L0.5 10.5 Z" fill="url(#docg)" stroke="#8AA6CF" stroke-width="0.8"/><path d="M5 0.5 L5 3 L7.5 3" fill="#E8F0FA" stroke="#8AA6CF" stroke-width="0.7"/></svg>
<div class="t" style="left:634.9px;top:127.50px;font-size:8.0px;color:#111;transform:scaleX(0.82);transform-origin:0 0;">Created</div>
<div class="t" style="left:699.7px;width:0;display:flex;justify-content:center;top:127.50px;font-size:8.0px;color:#111;"><span style="display:inline-block;transform:scaleX(0.82);transform-origin:50% 0">0 %</span></div>
<div class="t" style="left:727.0px;top:127.69px;font-size:8.0px;color:#111;transform:scaleX(0.873);transform-origin:0 0;">30.09.2008 17:33</div>
<svg style="position:absolute;left:220.3px;top:140.575px" width="9" height="9" viewBox="0 0 9 9"><defs><linearGradient id="cbg" x1="0" y1="0" x2="1" y2="1"><stop offset="0" stop-color="#DCDBD3"/><stop offset="1" stop-color="#FFFFFF"/></linearGradient></defs><rect x="0.5" y="0.5" width="8" height="8" rx="0.8" fill="url(#cbg)" stroke="#7F9DB9" stroke-width="1"/></svg>
<div class="t" style="left:244.2px;top:141.25px;font-size:8.0px;color:#111;transform:scaleX(0.845);transform-origin:0 0;">1.8 Public/product/professional liability insurance</div>
<svg style="position:absolute;left:554.8px;top:140.17499999999998px" width="10" height="9" viewBox="0 0 10 9"><defs><linearGradient id="urg" x1="0" y1="0" x2="0" y2="1"><stop offset="0" stop-color="#FFE87A"/><stop offset="1" stop-color="#E8A818"/></linearGradient></defs><path d="M4.4 1 Q5 0.2 5.6 1 L9.6 8.2 Q9.8 8.9 9 8.9 L1 8.9 Q0.2 8.9 0.4 8.2 Z" fill="url(#urg)" stroke="#D09A20" stroke-width="0.5"/><rect x="4.45" y="3" width="1.1" height="3.3" fill="#6A4A10"/><rect x="4.45" y="7" width="1.1" height="1" fill="#6A4A10"/></svg>
<div class="t" style="left:567px;top:141.25px;font-size:8.0px;color:#111;transform:scaleX(0.82);transform-origin:0 0;">Urgent</div>
<svg style="position:absolute;left:624px;top:139.67499999999998px" width="8" height="11" viewBox="0 0 8 11"><defs><linearGradient id="docg" x1="0" y1="0" x2="1" y2="1"><stop offset="0" stop-color="#FFFFFF"/><stop offset="1" stop-color="#C9DBF2"/></linearGradient></defs><path d="M0.5 0.5 L5 0.5 L7.5 3 L7.5 10.5 L0.5 10.5 Z" fill="url(#docg)" stroke="#8AA6CF" stroke-width="0.8"/><path d="M5 0.5 L5 3 L7.5 3" fill="#E8F0FA" stroke="#8AA6CF" stroke-width="0.7"/></svg>
<div class="t" style="left:634.9px;top:141.25px;font-size:8.0px;color:#111;transform:scaleX(0.82);transform-origin:0 0;">Created</div>
<div class="t" style="left:699.7px;width:0;display:flex;justify-content:center;top:141.25px;font-size:8.0px;color:#111;"><span style="display:inline-block;transform:scaleX(0.82);transform-origin:50% 0">0 %</span></div>
<div class="t" style="left:727.0px;top:141.44px;font-size:8.0px;color:#111;transform:scaleX(0.873);transform-origin:0 0;">30.09.2008 17:38</div>
<svg style="position:absolute;left:220.3px;top:154.325px" width="9" height="9" viewBox="0 0 9 9"><defs><linearGradient id="cbg" x1="0" y1="0" x2="1" y2="1"><stop offset="0" stop-color="#DCDBD3"/><stop offset="1" stop-color="#FFFFFF"/></linearGradient></defs><rect x="0.5" y="0.5" width="8" height="8" rx="0.8" fill="url(#cbg)" stroke="#7F9DB9" stroke-width="1"/></svg>
<div class="t" style="left:244.2px;top:155.00px;font-size:8.0px;color:#111;transform:scaleX(0.845);transform-origin:0 0;">1.9 Car insurance</div>
<svg style="position:absolute;left:555.0px;top:153.625px" width="10" height="10" viewBox="0 0 10 10"><defs><radialGradient id="nrm" cx="0.4" cy="0.35" r="0.7"><stop offset="0" stop-color="#FFB060"/><stop offset="0.6" stop-color="#E8741A"/><stop offset="1" stop-color="#B84A08"/></radialGradient></defs><circle cx="5" cy="5" r="4.7" fill="url(#nrm)"/><circle cx="5" cy="5" r="1.9" fill="#FFF4E8"/></svg>
<div class="t" style="left:567px;top:155.00px;font-size:8.0px;color:#111;transform:scaleX(0.82);transform-origin:0 0;">Normal</div>
<svg style="position:absolute;left:624px;top:153.42499999999998px" width="8" height="11" viewBox="0 0 8 11"><defs><linearGradient id="docg" x1="0" y1="0" x2="1" y2="1"><stop offset="0" stop-color="#FFFFFF"/><stop offset="1" stop-color="#C9DBF2"/></linearGradient></defs><path d="M0.5 0.5 L5 0.5 L7.5 3 L7.5 10.5 L0.5 10.5 Z" fill="url(#docg)" stroke="#8AA6CF" stroke-width="0.8"/><path d="M5 0.5 L5 3 L7.5 3" fill="#E8F0FA" stroke="#8AA6CF" stroke-width="0.7"/></svg>
<div class="t" style="left:634.9px;top:155.00px;font-size:8.0px;color:#111;transform:scaleX(0.82);transform-origin:0 0;">Created</div>
<div class="t" style="left:699.7px;width:0;display:flex;justify-content:center;top:155.00px;font-size:8.0px;color:#111;"><span style="display:inline-block;transform:scaleX(0.82);transform-origin:50% 0">0 %</span></div>
<div class="t" style="left:727.0px;top:155.19px;font-size:8.0px;color:#111;transform:scaleX(0.873);transform-origin:0 0;">30.09.2008 17:34</div>
<svg style="position:absolute;left:220.3px;top:168.075px" width="9" height="9" viewBox="0 0 9 9"><defs><linearGradient id="cbg" x1="0" y1="0" x2="1" y2="1"><stop offset="0" stop-color="#DCDBD3"/><stop offset="1" stop-color="#FFFFFF"/></linearGradient></defs><rect x="0.5" y="0.5" width="8" height="8" rx="0.8" fill="url(#cbg)" stroke="#7F9DB9" stroke-width="1"/></svg>
<div class="t" style="left:244.2px;top:168.75px;font-size:8.0px;color:#111;transform:scaleX(0.845);transform-origin:0 0;">1.10 Business trip insurance</div>
<svg style="position:absolute;left:555.3px;top:167.875px" width="9" height="9" viewBox="0 0 9 9"><defs><linearGradient id="red2" x1="0" y1="0" x2="0" y2="1"><stop offset="0" stop-color="#F2705A"/><stop offset="1" stop-color="#C02A18"/></linearGradient></defs><rect x="0" y="0" width="9" height="9" rx="1.4" fill="url(#red2)"/><path d="M2.6 4 L4.5 2.4 L6.4 4 M2.6 6.6 L4.5 5 L6.4 6.6" fill="none" stroke="#FFF0E8" stroke-width="1"/></svg>
<div class="t" style="left:567px;top:168.75px;font-size:8.0px;color:#111;transform:scaleX(0.82);transform-origin:0 0;">Highest</div>
<svg style="position:absolute;left:624px;top:167.17499999999998px" width="8" height="11" viewBox="0 0 8 11"><defs><linearGradient id="docg" x1="0" y1="0" x2="1" y2="1"><stop offset="0" stop-color="#FFFFFF"/><stop offset="1" stop-color="#C9DBF2"/></linearGradient></defs><path d="M0.5 0.5 L5 0.5 L7.5 3 L7.5 10.5 L0.5 10.5 Z" fill="url(#docg)" stroke="#8AA6CF" stroke-width="0.8"/><path d="M5 0.5 L5 3 L7.5 3" fill="#E8F0FA" stroke="#8AA6CF" stroke-width="0.7"/></svg>
<div class="t" style="left:634.9px;top:168.75px;font-size:8.0px;color:#111;transform:scaleX(0.82);transform-origin:0 0;">Created</div>
<div class="t" style="left:699.7px;width:0;display:flex;justify-content:center;top:168.75px;font-size:8.0px;color:#111;"><span style="display:inline-block;transform:scaleX(0.82);transform-origin:50% 0">0 %</span></div>
<div class="t" style="left:727.0px;top:168.94px;font-size:8.0px;color:#111;transform:scaleX(0.873);transform-origin:0 0;">30.09.2008 17:38</div>
<div class="t" style="left:200.2px;top:181.17px;font-size:8.0px;color:#333;transform:scaleX(0.84);transform-origin:0 0;">Category: 2. Grouping business needs to be insured</div>
<div class="t" style="left:363.0px;top:181.17px;font-size:8.0px;color:#333;transform:scaleX(0.9);transform-origin:0 0;">[ My Tasks ]</div>
<svg style="position:absolute;left:220.3px;top:193.075px" width="9" height="9" viewBox="0 0 9 9"><defs><linearGradient id="cbg" x1="0" y1="0" x2="1" y2="1"><stop offset="0" stop-color="#DCDBD3"/><stop offset="1" stop-color="#FFFFFF"/></linearGradient></defs><rect x="0.5" y="0.5" width="8" height="8" rx="0.8" fill="url(#cbg)" stroke="#7F9DB9" stroke-width="1"/></svg>
<div class="t" style="left:244.2px;top:193.75px;font-size:8.0px;color:#111;transform:scaleX(0.845);transform-origin:0 0;">3.1 Buildings, roofing, foundations, internal walls, attached structures</div>
<svg style="position:absolute;left:555.0px;top:192.375px" width="10" height="10" viewBox="0 0 10 10"><defs><radialGradient id="nrm" cx="0.4" cy="0.35" r="0.7"><stop offset="0" stop-color="#FFB060"/><stop offset="0.6" stop-color="#E8741A"/><stop offset="1" stop-color="#B84A08"/></radialGradient></defs><circle cx="5" cy="5" r="4.7" fill="url(#nrm)"/><circle cx="5" cy="5" r="1.9" fill="#FFF4E8"/></svg>
<div class="t" style="left:567px;top:193.75px;font-size:8.0px;color:#111;transform:scaleX(0.82);transform-origin:0 0;">Normal</div>
<svg style="position:absolute;left:624px;top:192.17499999999998px" width="8" height="11" viewBox="0 0 8 11"><defs><linearGradient id="docg" x1="0" y1="0" x2="1" y2="1"><stop offset="0" stop-color="#FFFFFF"/><stop offset="1" stop-color="#C9DBF2"/></linearGradient></defs><path d="M0.5 0.5 L5 0.5 L7.5 3 L7.5 10.5 L0.5 10.5 Z" fill="url(#docg)" stroke="#8AA6CF" stroke-width="0.8"/><path d="M5 0.5 L5 3 L7.5 3" fill="#E8F0FA" stroke="#8AA6CF" stroke-width="0.7"/></svg>
<div class="t" style="left:634.9px;top:193.75px;font-size:8.0px;color:#111;transform:scaleX(0.82);transform-origin:0 0;">Created</div>
<div class="t" style="left:699.7px;width:0;display:flex;justify-content:center;top:193.75px;font-size:8.0px;color:#111;"><span style="display:inline-block;transform:scaleX(0.82);transform-origin:50% 0">0 %</span></div>
<div class="t" style="left:727.0px;top:193.94px;font-size:8.0px;color:#111;transform:scaleX(0.873);transform-origin:0 0;">30.09.2008 17:34</div>
<svg style="position:absolute;left:220.3px;top:206.825px" width="9" height="9" viewBox="0 0 9 9"><defs><linearGradient id="cbg" x1="0" y1="0" x2="1" y2="1"><stop offset="0" stop-color="#DCDBD3"/><stop offset="1" stop-color="#FFFFFF"/></linearGradient></defs><rect x="0.5" y="0.5" width="8" height="8" rx="0.8" fill="url(#cbg)" stroke="#7F9DB9" stroke-width="1"/></svg>
<div class="t" style="left:244.2px;top:207.50px;font-size:8.0px;color:#111;transform:scaleX(0.845);transform-origin:0 0;">3.2 External structures, fences, bridges, signs, etc.</div>
<svg style="position:absolute;left:555.0px;top:206.125px" width="10" height="10" viewBox="0 0 10 10"><defs><radialGradient id="nrm" cx="0.4" cy="0.35" r="0.7"><stop offset="0" stop-color="#FFB060"/><stop offset="0.6" stop-color="#E8741A"/><stop offset="1" stop-color="#B84A08"/></radialGradient></defs><circle cx="5" cy="5" r="4.7" fill="url(#nrm)"/><circle cx="5" cy="5" r="1.9" fill="#FFF4E8"/></svg>
<div class="t" style="left:567px;top:207.50px;font-size:8.0px;color:#111;transform:scaleX(0.82);transform-origin:0 0;">Normal</div>
<svg style="position:absolute;left:624px;top:205.92499999999998px" width="8" height="11" viewBox="0 0 8 11"><defs><linearGradient id="docg" x1="0" y1="0" x2="1" y2="1"><stop offset="0" stop-color="#FFFFFF"/><stop offset="1" stop-color="#C9DBF2"/></linearGradient></defs><path d="M0.5 0.5 L5 0.5 L7.5 3 L7.5 10.5 L0.5 10.5 Z" fill="url(#docg)" stroke="#8AA6CF" stroke-width="0.8"/><path d="M5 0.5 L5 3 L7.5 3" fill="#E8F0FA" stroke="#8AA6CF" stroke-width="0.7"/></svg>
<div class="t" style="left:634.9px;top:207.50px;font-size:8.0px;color:#111;transform:scaleX(0.82);transform-origin:0 0;">Created</div>
<div class="t" style="left:699.7px;width:0;display:flex;justify-content:center;top:207.50px;font-size:8.0px;color:#111;"><span style="display:inline-block;transform:scaleX(0.82);transform-origin:50% 0">0 %</span></div>
<div class="t" style="left:727.0px;top:207.69px;font-size:8.0px;color:#111;transform:scaleX(0.873);transform-origin:0 0;">30.09.2008 17:34</div>
<svg style="position:absolute;left:220.3px;top:220.575px" width="9" height="9" viewBox="0 0 9 9"><defs><linearGradient id="cbg" x1="0" y1="0" x2="1" y2="1"><stop offset="0" stop-color="#DCDBD3"/><stop offset="1" stop-color="#FFFFFF"/></linearGradient></defs><rect x="0.5" y="0.5" width="8" height="8" rx="0.8" fill="url(#cbg)" stroke="#7F9DB9" stroke-width="1"/></svg>
<div class="t" style="left:244.2px;top:221.25px;font-size:8.0px;color:#111;transform:scaleX(0.845);transform-origin:0 0;">3.3 Furniture, drapes, carpeting, decorations, etc.</div>
<svg style="position:absolute;left:555.0px;top:219.875px" width="10" height="10" viewBox="0 0 10 10"><defs><radialGradient id="nrm" cx="0.4" cy="0.35" r="0.7"><stop offset="0" stop-color="#FFB060"/><stop offset="0.6" stop-color="#E8741A"/><stop offset="1" stop-color="#B84A08"/></radialGradient></defs><circle cx="5" cy="5" r="4.7" fill="url(#nrm)"/><circle cx="5" cy="5" r="1.9" fill="#FFF4E8"/></svg>
<div class="t" style="left:567px;top:221.25px;font-size:8.0px;color:#111;transform:scaleX(0.82);transform-origin:0 0;">Normal</div>
<svg style="position:absolute;left:624px;top:219.67499999999998px" width="8" height="11" viewBox="0 0 8 11"><defs><linearGradient id="docg" x1="0" y1="0" x2="1" y2="1"><stop offset="0" stop-color="#FFFFFF"/><stop offset="1" stop-color="#C9DBF2"/></linearGradient></defs><path d="M0.5 0.5 L5 0.5 L7.5 3 L7.5 10.5 L0.5 10.5 Z" fill="url(#docg)" stroke="#8AA6CF" stroke-width="0.8"/><path d="M5 0.5 L5 3 L7.5 3" fill="#E8F0FA" stroke="#8AA6CF" stroke-width="0.7"/></svg>
<div class="t" style="left:634.9px;top:221.25px;font-size:8.0px;color:#111;transform:scaleX(0.82);transform-origin:0 0;">Created</div>
<div class="t" style="left:699.7px;width:0;display:flex;justify-content:center;top:221.25px;font-size:8.0px;color:#111;"><span style="display:inline-block;transform:scaleX(0.82);transform-origin:50% 0">0 %</span></div>
<div class="t" style="left:727.0px;top:221.44px;font-size:8.0px;color:#111;transform:scaleX(0.873);transform-origin:0 0;">30.09.2008 17:34</div>
<svg style="position:absolute;left:220.3px;top:234.325px" width="9" height="9" viewBox="0 0 9 9"><defs><linearGradient id="cbg" x1="0" y1="0" x2="1" y2="1"><stop offset="0" stop-color="#DCDBD3"/><stop offset="1" stop-color="#FFFFFF"/></linearGradient></defs><rect x="0.5" y="0.5" width="8" height="8" rx="0.8" fill="url(#cbg)" stroke="#7F9DB9" stroke-width="1"/></svg>
<div class="t" style="left:244.2px;top:235.00px;font-size:8.0px;color:#111;transform:scaleX(0.845);transform-origin:0 0;">3.4 Office equipment owned and leased (computer systems, phone systems, etc.)</div>
<svg style="position:absolute;left:555.0px;top:233.625px" width="10" height="10" viewBox="0 0 10 10"><defs><radialGradient id="nrm" cx="0.4" cy="0.35" r="0.7"><stop offset="0" stop-color="#FFB060"/><stop offset="0.6" stop-color="#E8741A"/><stop offset="1" stop-color="#B84A08"/></radialGradient></defs><circle cx="5" cy="5" r="4.7" fill="url(#nrm)"/><circle cx="5" cy="5" r="1.9" fill="#FFF4E8"/></svg>
<div class="t" style="left:567px;top:235.00px;font-size:8.0px;color:#111;transform:scaleX(0.82);transform-origin:0 0;">Normal</div>
<svg style="position:absolute;left:624px;top:233.42499999999998px" width="8" height="11" viewBox="0 0 8 11"><defs><linearGradient id="docg" x1="0" y1="0" x2="1" y2="1"><stop offset="0" stop-color="#FFFFFF"/><stop offset="1" stop-color="#C9DBF2"/></linearGradient></defs><path d="M0.5 0.5 L5 0.5 L7.5 3 L7.5 10.5 L0.5 10.5 Z" fill="url(#docg)" stroke="#8AA6CF" stroke-width="0.8"/><path d="M5 0.5 L5 3 L7.5 3" fill="#E8F0FA" stroke="#8AA6CF" stroke-width="0.7"/></svg>
<div class="t" style="left:634.9px;top:235.00px;font-size:8.0px;color:#111;transform:scaleX(0.82);transform-origin:0 0;">Created</div>
<div class="t" style="left:699.7px;width:0;display:flex;justify-content:center;top:235.00px;font-size:8.0px;color:#111;"><span style="display:inline-block;transform:scaleX(0.82);transform-origin:50% 0">0 %</span></div>
<div class="t" style="left:727.0px;top:235.19px;font-size:8.0px;color:#111;transform:scaleX(0.873);transform-origin:0 0;">30.09.2008 17:34</div>
<svg style="position:absolute;left:220.3px;top:248.075px" width="9" height="9" viewBox="0 0 9 9"><defs><linearGradient id="cbg" x1="0" y1="0" x2="1" y2="1"><stop offset="0" stop-color="#DCDBD3"/><stop offset="1" stop-color="#FFFFFF"/></linearGradient></defs><rect x="0.5" y="0.5" width="8" height="8" rx="0.8" fill="url(#cbg)" stroke="#7F9DB9" stroke-width="1"/></svg>
<div class="t" style="left:244.2px;top:248.75px;font-size:8.0px;color:#111;transform:scaleX(0.845);transform-origin:0 0;">3.5 Security systems (cameras, sensors, etc.)</div>
<svg style="position:absolute;left:555.0px;top:247.375px" width="10" height="10" viewBox="0 0 10 10"><defs><radialGradient id="nrm" cx="0.4" cy="0.35" r="0.7"><stop offset="0" stop-color="#FFB060"/><stop offset="0.6" stop-color="#E8741A"/><stop offset="1" stop-color="#B84A08"/></radialGradient></defs><circle cx="5" cy="5" r="4.7" fill="url(#nrm)"/><circle cx="5" cy="5" r="1.9" fill="#FFF4E8"/></svg>
<div class="t" style="left:567px;top:248.75px;font-size:8.0px;color:#111;transform:scaleX(0.82);transform-origin:0 0;">Normal</div>
<svg style="position:absolute;left:624px;top:247.17499999999998px" width="8" height="11" viewBox="0 0 8 11"><defs><linearGradient id="docg" x1="0" y1="0" x2="1" y2="1"><stop offset="0" stop-color="#FFFFFF"/><stop offset="1" stop-color="#C9DBF2"/></linearGradient></defs><path d="M0.5 0.5 L5 0.5 L7.5 3 L7.5 10.5 L0.5 10.5 Z" fill="url(#docg)" stroke="#8AA6CF" stroke-width="0.8"/><path d="M5 0.5 L5 3 L7.5 3" fill="#E8F0FA" stroke="#8AA6CF" stroke-width="0.7"/></svg>
<div class="t" style="left:634.9px;top:248.75px;font-size:8.0px;color:#111;transform:scaleX(0.82);transform-origin:0 0;">Created</div>
<div class="t" style="left:699.7px;width:0;display:flex;justify-content:center;top:248.75px;font-size:8.0px;color:#111;"><span style="display:inline-block;transform:scaleX(0.82);transform-origin:50% 0">0 %</span></div>
<div class="t" style="left:727.0px;top:248.94px;font-size:8.0px;color:#111;transform:scaleX(0.873);transform-origin:0 0;">30.09.2008 17:34</div>
<svg style="position:absolute;left:220.3px;top:261.82500000000005px" width="9" height="9" viewBox="0 0 9 9"><defs><linearGradient id="cbg" x1="0" y1="0" x2="1" y2="1"><stop offset="0" stop-color="#DCDBD3"/><stop offset="1" stop-color="#FFFFFF"/></linearGradient></defs><rect x="0.5" y="0.5" width="8" height="8" rx="0.8" fill="url(#cbg)" stroke="#7F9DB9" stroke-width="1"/></svg>
<div class="t" style="left:244.2px;top:262.50px;font-size:8.0px;color:#111;transform:scaleX(0.845);transform-origin:0 0;">3.6 Communication equipment (telephones, radio systems, satellites, etc.)</div>
<svg style="position:absolute;left:555.0px;top:261.125px" width="10" height="10" viewBox="0 0 10 10"><defs><radialGradient id="nrm" cx="0.4" cy="0.35" r="0.7"><stop offset="0" stop-color="#FFB060"/><stop offset="0.6" stop-color="#E8741A"/><stop offset="1" stop-color="#B84A08"/></radialGradient></defs><circle cx="5" cy="5" r="4.7" fill="url(#nrm)"/><circle cx="5" cy="5" r="1.9" fill="#FFF4E8"/></svg>
<div class="t" style="left:567px;top:262.50px;font-size:8.0px;color:#111;transform:scaleX(0.82);transform-origin:0 0;">Normal</div>
<svg style="position:absolute;left:624px;top:260.925px" width="8" height="11" viewBox="0 0 8 11"><defs><linearGradient id="docg" x1="0" y1="0" x2="1" y2="1"><stop offset="0" stop-color="#FFFFFF"/><stop offset="1" stop-color="#C9DBF2"/></linearGradient></defs><path d="M0.5 0.5 L5 0.5 L7.5 3 L7.5 10.5 L0.5 10.5 Z" fill="url(#docg)" stroke="#8AA6CF" stroke-width="0.8"/><path d="M5 0.5 L5 3 L7.5 3" fill="#E8F0FA" stroke="#8AA6CF" stroke-width="0.7"/></svg>
<div class="t" style="left:634.9px;top:262.50px;font-size:8.0px;color:#111;transform:scaleX(0.82);transform-origin:0 0;">Created</div>
<div class="t" style="left:699.7px;width:0;display:flex;justify-content:center;top:262.50px;font-size:8.0px;color:#111;"><span style="display:inline-block;transform:scaleX(0.82);transform-origin:50% 0">0 %</span></div>
<div class="t" style="left:727.0px;top:262.70px;font-size:8.0px;color:#111;transform:scaleX(0.873);transform-origin:0 0;">30.09.2008 17:34</div>
<div class="t" style="left:200.2px;top:274.92px;font-size:8.0px;color:#333;transform:scaleX(0.84);transform-origin:0 0;">Category: 3. Defining objects to be insured</div>
<div class="t" style="left:336.0px;top:274.92px;font-size:8.0px;color:#333;transform:scaleX(0.9);transform-origin:0 0;">[ My Tasks ]</div>
<svg style="position:absolute;left:220.3px;top:286.82500000000005px" width="9" height="9" viewBox="0 0 9 9"><defs><linearGradient id="cbg" x1="0" y1="0" x2="1" y2="1"><stop offset="0" stop-color="#DCDBD3"/><stop offset="1" stop-color="#FFFFFF"/></linearGradient></defs><rect x="0.5" y="0.5" width="8" height="8" rx="0.8" fill="url(#cbg)" stroke="#7F9DB9" stroke-width="1"/></svg>
<div class="t" style="left:244.2px;top:287.50px;font-size:8.0px;color:#111;transform:scaleX(0.845);transform-origin:0 0;">4.2 Flooding</div>
<svg style="position:absolute;left:555.0px;top:286.125px" width="10" height="10" viewBox="0 0 10 10"><defs><radialGradient id="nrm" cx="0.4" cy="0.35" r="0.7"><stop offset="0" stop-color="#FFB060"/><stop offset="0.6" stop-color="#E8741A"/><stop offset="1" stop-color="#B84A08"/></radialGradient></defs><circle cx="5" cy="5" r="4.7" fill="url(#nrm)"/><circle cx="5" cy="5" r="1.9" fill="#FFF4E8"/></svg>
<div class="t" style="left:567px;top:287.50px;font-size:8.0px;color:#111;transform:scaleX(0.82);transform-origin:0 0;">Normal</div>
<svg style="position:absolute;left:624px;top:285.925px" width="8" height="11" viewBox="0 0 8 11"><defs><linearGradient id="docg" x1="0" y1="0" x2="1" y2="1"><stop offset="0" stop-color="#FFFFFF"/><stop offset="1" stop-color="#C9DBF2"/></linearGradient></defs><path d="M0.5 0.5 L5 0.5 L7.5 3 L7.5 10.5 L0.5 10.5 Z" fill="url(#docg)" stroke="#8AA6CF" stroke-width="0.8"/><path d="M5 0.5 L5 3 L7.5 3" fill="#E8F0FA" stroke="#8AA6CF" stroke-width="0.7"/></svg>
<div class="t" style="left:634.9px;top:287.50px;font-size:8.0px;color:#111;transform:scaleX(0.82);transform-origin:0 0;">Created</div>
<div class="t" style="left:699.7px;width:0;display:flex;justify-content:center;top:287.50px;font-size:8.0px;color:#111;"><span style="display:inline-block;transform:scaleX(0.82);transform-origin:50% 0">0 %</span></div>
<div class="t" style="left:727.0px;top:287.70px;font-size:8.0px;color:#111;transform:scaleX(0.873);transform-origin:0 0;">30.09.2008 17:34</div>
<svg style="position:absolute;left:220.3px;top:300.57500000000005px" width="9" height="9" viewBox="0 0 9 9"><defs><linearGradient id="cbg" x1="0" y1="0" x2="1" y2="1"><stop offset="0" stop-color="#DCDBD3"/><stop offset="1" stop-color="#FFFFFF"/></linearGradient></defs><rect x="0.5" y="0.5" width="8" height="8" rx="0.8" fill="url(#cbg)" stroke="#7F9DB9" stroke-width="1"/></svg>
<div class="t" style="left:244.2px;top:301.25px;font-size:8.0px;color:#111;transform:scaleX(0.845);transform-origin:0 0;">4.4 Earthquake</div>
<svg style="position:absolute;left:555.0px;top:299.875px" width="10" height="10" viewBox="0 0 10 10"><defs><radialGradient id="nrm" cx="0.4" cy="0.35" r="0.7"><stop offset="0" stop-color="#FFB060"/><stop offset="0.6" stop-color="#E8741A"/><stop offset="1" stop-color="#B84A08"/></radialGradient></defs><circle cx="5" cy="5" r="4.7" fill="url(#nrm)"/><circle cx="5" cy="5" r="1.9" fill="#FFF4E8"/></svg>
<div class="t" style="left:567px;top:301.25px;font-size:8.0px;color:#111;transform:scaleX(0.82);transform-origin:0 0;">Normal</div>
<svg style="position:absolute;left:624px;top:299.675px" width="8" height="11" viewBox="0 0 8 11"><defs><linearGradient id="docg" x1="0" y1="0" x2="1" y2="1"><stop offset="0" stop-color="#FFFFFF"/><stop offset="1" stop-color="#C9DBF2"/></linearGradient></defs><path d="M0.5 0.5 L5 0.5 L7.5 3 L7.5 10.5 L0.5 10.5 Z" fill="url(#docg)" stroke="#8AA6CF" stroke-width="0.8"/><path d="M5 0.5 L5 3 L7.5 3" fill="#E8F0FA" stroke="#8AA6CF" stroke-width="0.7"/></svg>
<div class="t" style="left:634.9px;top:301.25px;font-size:8.0px;color:#111;transform:scaleX(0.82);transform-origin:0 0;">Created</div>
<div class="t" style="left:699.7px;width:0;display:flex;justify-content:center;top:301.25px;font-size:8.0px;color:#111;"><span style="display:inline-block;transform:scaleX(0.82);transform-origin:50% 0">0 %</span></div>
<div class="t" style="left:727.0px;top:301.45px;font-size:8.0px;color:#111;transform:scaleX(0.873);transform-origin:0 0;">30.09.2008 17:34</div>
<svg style="position:absolute;left:220.3px;top:314.32500000000005px" width="9" height="9" viewBox="0 0 9 9"><defs><linearGradient id="cbg" x1="0" y1="0" x2="1" y2="1"><stop offset="0" stop-color="#DCDBD3"/><stop offset="1" stop-color="#FFFFFF"/></linearGradient></defs><rect x="0.5" y="0.5" width="8" height="8" rx="0.8" fill="url(#cbg)" stroke="#7F9DB9" stroke-width="1"/></svg>
<div class="t" style="left:244.2px;top:315.00px;font-size:8.0px;color:#111;transform:scaleX(0.845);transform-origin:0 0;">4.5 Hail</div>
<svg style="position:absolute;left:555.0px;top:313.625px" width="10" height="10" viewBox="0 0 10 10"><defs><radialGradient id="nrm" cx="0.4" cy="0.35" r="0.7"><stop offset="0" stop-color="#FFB060"/><stop offset="0.6" stop-color="#E8741A"/><stop offset="1" stop-color="#B84A08"/></radialGradient></defs><circle cx="5" cy="5" r="4.7" fill="url(#nrm)"/><circle cx="5" cy="5" r="1.9" fill="#FFF4E8"/></svg>
<div class="t" style="left:567px;top:315.00px;font-size:8.0px;color:#111;transform:scaleX(0.82);transform-origin:0 0;">Normal</div>
<svg style="position:absolute;left:624px;top:313.425px" width="8" height="11" viewBox="0 0 8 11"><defs><linearGradient id="docg" x1="0" y1="0" x2="1" y2="1"><stop offset="0" stop-color="#FFFFFF"/><stop offset="1" stop-color="#C9DBF2"/></linearGradient></defs><path d="M0.5 0.5 L5 0.5 L7.5 3 L7.5 10.5 L0.5 10.5 Z" fill="url(#docg)" stroke="#8AA6CF" stroke-width="0.8"/><path d="M5 0.5 L5 3 L7.5 3" fill="#E8F0FA" stroke="#8AA6CF" stroke-width="0.7"/></svg>
<div class="t" style="left:634.9px;top:315.00px;font-size:8.0px;color:#111;transform:scaleX(0.82);transform-origin:0 0;">Created</div>
<div class="t" style="left:699.7px;width:0;display:flex;justify-content:center;top:315.00px;font-size:8.0px;color:#111;"><span style="display:inline-block;transform:scaleX(0.82);transform-origin:50% 0">0 %</span></div>
<div class="t" style="left:727.0px;top:315.20px;font-size:8.0px;color:#111;transform:scaleX(0.873);transform-origin:0 0;">30.09.2008 17:34</div>
<svg style="position:absolute;left:220.3px;top:328.07500000000005px" width="9" height="9" viewBox="0 0 9 9"><defs><linearGradient id="cbg" x1="0" y1="0" x2="1" y2="1"><stop offset="0" stop-color="#DCDBD3"/><stop offset="1" stop-color="#FFFFFF"/></linearGradient></defs><rect x="0.5" y="0.5" width="8" height="8" rx="0.8" fill="url(#cbg)" stroke="#7F9DB9" stroke-width="1"/></svg>
<div class="t" style="left:244.2px;top:328.75px;font-size:8.0px;color:#111;transform:scaleX(0.845);transform-origin:0 0;">4.6 Lightning</div>
<svg style="position:absolute;left:555.0px;top:327.375px" width="10" height="10" viewBox="0 0 10 10"><defs><radialGradient id="nrm" cx="0.4" cy="0.35" r="0.7"><stop offset="0" stop-color="#FFB060"/><stop offset="0.6" stop-color="#E8741A"/><stop offset="1" stop-color="#B84A08"/></radialGradient></defs><circle cx="5" cy="5" r="4.7" fill="url(#nrm)"/><circle cx="5" cy="5" r="1.9" fill="#FFF4E8"/></svg>
<div class="t" style="left:567px;top:328.75px;font-size:8.0px;color:#111;transform:scaleX(0.82);transform-origin:0 0;">Normal</div>
<svg style="position:absolute;left:624px;top:327.175px" width="8" height="11" viewBox="0 0 8 11"><defs><linearGradient id="docg" x1="0" y1="0" x2="1" y2="1"><stop offset="0" stop-color="#FFFFFF"/><stop offset="1" stop-color="#C9DBF2"/></linearGradient></defs><path d="M0.5 0.5 L5 0.5 L7.5 3 L7.5 10.5 L0.5 10.5 Z" fill="url(#docg)" stroke="#8AA6CF" stroke-width="0.8"/><path d="M5 0.5 L5 3 L7.5 3" fill="#E8F0FA" stroke="#8AA6CF" stroke-width="0.7"/></svg>
<div class="t" style="left:634.9px;top:328.75px;font-size:8.0px;color:#111;transform:scaleX(0.82);transform-origin:0 0;">Created</div>
<div class="t" style="left:699.7px;width:0;display:flex;justify-content:center;top:328.75px;font-size:8.0px;color:#111;"><span style="display:inline-block;transform:scaleX(0.82);transform-origin:50% 0">0 %</span></div>
<div class="t" style="left:727.0px;top:328.95px;font-size:8.0px;color:#111;transform:scaleX(0.873);transform-origin:0 0;">30.09.2008 17:34</div>
<svg style="position:absolute;left:220.3px;top:341.82500000000005px" width="9" height="9" viewBox="0 0 9 9"><defs><linearGradient id="cbg" x1="0" y1="0" x2="1" y2="1"><stop offset="0" stop-color="#DCDBD3"/><stop offset="1" stop-color="#FFFFFF"/></linearGradient></defs><rect x="0.5" y="0.5" width="8" height="8" rx="0.8" fill="url(#cbg)" stroke="#7F9DB9" stroke-width="1"/></svg>
<div class="t" style="left:244.2px;top:342.50px;font-size:8.0px;color:#111;transform:scaleX(0.845);transform-origin:0 0;">4.7 Mudslide</div>
<svg style="position:absolute;left:555.0px;top:341.125px" width="10" height="10" viewBox="0 0 10 10"><defs><radialGradient id="nrm" cx="0.4" cy="0.35" r="0.7"><stop offset="0" stop-color="#FFB060"/><stop offset="0.6" stop-color="#E8741A"/><stop offset="1" stop-color="#B84A08"/></radialGradient></defs><circle cx="5" cy="5" r="4.7" fill="url(#nrm)"/><circle cx="5" cy="5" r="1.9" fill="#FFF4E8"/></svg>
<div class="t" style="left:567px;top:342.50px;font-size:8.0px;color:#111;transform:scaleX(0.82);transform-origin:0 0;">Normal</div>
<svg style="position:absolute;left:624px;top:340.925px" width="8" height="11" viewBox="0 0 8 11"><defs><linearGradient id="docg" x1="0" y1="0" x2="1" y2="1"><stop offset="0" stop-color="#FFFFFF"/><stop offset="1" stop-color="#C9DBF2"/></linearGradient></defs><path d="M0.5 0.5 L5 0.5 L7.5 3 L7.5 10.5 L0.5 10.5 Z" fill="url(#docg)" stroke="#8AA6CF" stroke-width="0.8"/><path d="M5 0.5 L5 3 L7.5 3" fill="#E8F0FA" stroke="#8AA6CF" stroke-width="0.7"/></svg>
<div class="t" style="left:634.9px;top:342.50px;font-size:8.0px;color:#111;transform:scaleX(0.82);transform-origin:0 0;">Created</div>
<div class="t" style="left:699.7px;width:0;display:flex;justify-content:center;top:342.50px;font-size:8.0px;color:#111;"><span style="display:inline-block;transform:scaleX(0.82);transform-origin:50% 0">0 %</span></div>
<div class="t" style="left:727.0px;top:342.70px;font-size:8.0px;color:#111;transform:scaleX(0.873);transform-origin:0 0;">30.09.2008 17:35</div>
<svg style="position:absolute;left:220.3px;top:355.57500000000005px" width="9" height="9" viewBox="0 0 9 9"><defs><linearGradient id="cbg" x1="0" y1="0" x2="1" y2="1"><stop offset="0" stop-color="#DCDBD3"/><stop offset="1" stop-color="#FFFFFF"/></linearGradient></defs><rect x="0.5" y="0.5" width="8" height="8" rx="0.8" fill="url(#cbg)" stroke="#7F9DB9" stroke-width="1"/></svg>
<div class="t" style="left:244.2px;top:356.25px;font-size:8.0px;color:#111;transform:scaleX(0.845);transform-origin:0 0;">4.8 Damage caused by aircraft</div>
<svg style="position:absolute;left:555.0px;top:354.875px" width="10" height="10" viewBox="0 0 10 10"><defs><radialGradient id="nrm" cx="0.4" cy="0.35" r="0.7"><stop offset="0" stop-color="#FFB060"/><stop offset="0.6" stop-color="#E8741A"/><stop offset="1" stop-color="#B84A08"/></radialGradient></defs><circle cx="5" cy="5" r="4.7" fill="url(#nrm)"/><circle cx="5" cy="5" r="1.9" fill="#FFF4E8"/></svg>
<div class="t" style="left:567px;top:356.25px;font-size:8.0px;color:#111;transform:scaleX(0.82);transform-origin:0 0;">Normal</div>
<svg style="position:absolute;left:624px;top:354.675px" width="8" height="11" viewBox="0 0 8 11"><defs><linearGradient id="docg" x1="0" y1="0" x2="1" y2="1"><stop offset="0" stop-color="#FFFFFF"/><stop offset="1" stop-color="#C9DBF2"/></linearGradient></defs><path d="M0.5 0.5 L5 0.5 L7.5 3 L7.5 10.5 L0.5 10.5 Z" fill="url(#docg)" stroke="#8AA6CF" stroke-width="0.8"/><path d="M5 0.5 L5 3 L7.5 3" fill="#E8F0FA" stroke="#8AA6CF" stroke-width="0.7"/></svg>
<div class="t" style="left:634.9px;top:356.25px;font-size:8.0px;color:#111;transform:scaleX(0.82);transform-origin:0 0;">Created</div>
<div class="t" style="left:699.7px;width:0;display:flex;justify-content:center;top:356.25px;font-size:8.0px;color:#111;"><span style="display:inline-block;transform:scaleX(0.82);transform-origin:50% 0">0 %</span></div>
<div class="t" style="left:727.0px;top:356.45px;font-size:8.0px;color:#111;transform:scaleX(0.873);transform-origin:0 0;">30.09.2008 17:35</div>
<svg style="position:absolute;left:220.3px;top:369.32500000000005px" width="9" height="9" viewBox="0 0 9 9"><defs><linearGradient id="cbg" x1="0" y1="0" x2="1" y2="1"><stop offset="0" stop-color="#DCDBD3"/><stop offset="1" stop-color="#FFFFFF"/></linearGradient></defs><rect x="0.5" y="0.5" width="8" height="8" rx="0.8" fill="url(#cbg)" stroke="#7F9DB9" stroke-width="1"/></svg>
<div class="t" style="left:244.2px;top:370.00px;font-size:8.0px;color:#111;transform:scaleX(0.845);transform-origin:0 0;">4.9 Explosions</div>
<svg style="position:absolute;left:555.0px;top:368.625px" width="10" height="10" viewBox="0 0 10 10"><defs><radialGradient id="nrm" cx="0.4" cy="0.35" r="0.7"><stop offset="0" stop-color="#FFB060"/><stop offset="0.6" stop-color="#E8741A"/><stop offset="1" stop-color="#B84A08"/></radialGradient></defs><circle cx="5" cy="5" r="4.7" fill="url(#nrm)"/><circle cx="5" cy="5" r="1.9" fill="#FFF4E8"/></svg>
<div class="t" style="left:567px;top:370.00px;font-size:8.0px;color:#111;transform:scaleX(0.82);transform-origin:0 0;">Normal</div>
<svg style="position:absolute;left:624px;top:368.425px" width="8" height="11" viewBox="0 0 8 11"><defs><linearGradient id="docg" x1="0" y1="0" x2="1" y2="1"><stop offset="0" stop-color="#FFFFFF"/><stop offset="1" stop-color="#C9DBF2"/></linearGradient></defs><path d="M0.5 0.5 L5 0.5 L7.5 3 L7.5 10.5 L0.5 10.5 Z" fill="url(#docg)" stroke="#8AA6CF" stroke-width="0.8"/><path d="M5 0.5 L5 3 L7.5 3" fill="#E8F0FA" stroke="#8AA6CF" stroke-width="0.7"/></svg>
<div class="t" style="left:634.9px;top:370.00px;font-size:8.0px;color:#111;transform:scaleX(0.82);transform-origin:0 0;">Created</div>
<div class="t" style="left:699.7px;width:0;display:flex;justify-content:center;top:370.00px;font-size:8.0px;color:#111;"><span style="display:inline-block;transform:scaleX(0.82);transform-origin:50% 0">0 %</span></div>
<div class="t" style="left:727.0px;top:370.20px;font-size:8.0px;color:#111;transform:scaleX(0.873);transform-origin:0 0;">30.09.2008 17:35</div>
<svg style="position:absolute;left:220.3px;top:383.07500000000005px" width="9" height="9" viewBox="0 0 9 9"><defs><linearGradient id="cbg" x1="0" y1="0" x2="1" y2="1"><stop offset="0" stop-color="#DCDBD3"/><stop offset="1" stop-color="#FFFFFF"/></linearGradient></defs><rect x="0.5" y="0.5" width="8" height="8" rx="0.8" fill="url(#cbg)" stroke="#7F9DB9" stroke-width="1"/></svg>
<div class="t" style="left:244.2px;top:383.75px;font-size:8.0px;color:#111;transform:scaleX(0.845);transform-origin:0 0;">4.10 Sinkholes</div>
<svg style="position:absolute;left:555.0px;top:382.375px" width="10" height="10" viewBox="0 0 10 10"><defs><radialGradient id="nrm" cx="0.4" cy="0.35" r="0.7"><stop offset="0" stop-color="#FFB060"/><stop offset="0.6" stop-color="#E8741A"/><stop offset="1" stop-color="#B84A08"/></radialGradient></defs><circle cx="5" cy="5" r="4.7" fill="url(#nrm)"/><circle cx="5" cy="5" r="1.9" fill="#FFF4E8"/></svg>
<div class="t" style="left:567px;top:383.75px;font-size:8.0px;color:#111;transform:scaleX(0.82);transform-origin:0 0;">Normal</div>
<svg style="position:absolute;left:624px;top:382.175px" width="8" height="11" viewBox="0 0 8 11"><defs><linearGradient id="docg" x1="0" y1="0" x2="1" y2="1"><stop offset="0" stop-color="#FFFFFF"/><stop offset="1" stop-color="#C9DBF2"/></linearGradient></defs><path d="M0.5 0.5 L5 0.5 L7.5 3 L7.5 10.5 L0.5 10.5 Z" fill="url(#docg)" stroke="#8AA6CF" stroke-width="0.8"/><path d="M5 0.5 L5 3 L7.5 3" fill="#E8F0FA" stroke="#8AA6CF" stroke-width="0.7"/></svg>
<div class="t" style="left:634.9px;top:383.75px;font-size:8.0px;color:#111;transform:scaleX(0.82);transform-origin:0 0;">Created</div>
<div class="t" style="left:699.7px;width:0;display:flex;justify-content:center;top:383.75px;font-size:8.0px;color:#111;"><span style="display:inline-block;transform:scaleX(0.82);transform-origin:50% 0">0 %</span></div>
<div class="t" style="left:727.0px;top:383.95px;font-size:8.0px;color:#111;transform:scaleX(0.873);transform-origin:0 0;">30.09.2008 17:35</div>
<svg style="position:absolute;left:220.3px;top:396.82500000000005px" width="9" height="9" viewBox="0 0 9 9"><defs><linearGradient id="cbg" x1="0" y1="0" x2="1" y2="1"><stop offset="0" stop-color="#DCDBD3"/><stop offset="1" stop-color="#FFFFFF"/></linearGradient></defs><rect x="0.5" y="0.5" width="8" height="8" rx="0.8" fill="url(#cbg)" stroke="#7F9DB9" stroke-width="1"/></svg>
<div class="t" style="left:244.2px;top:397.50px;font-size:8.0px;color:#111;transform:scaleX(0.845);transform-origin:0 0;">4.11 Arson</div>
<svg style="position:absolute;left:555.0px;top:396.125px" width="10" height="10" viewBox="0 0 10 10"><defs><radialGradient id="nrm" cx="0.4" cy="0.35" r="0.7"><stop offset="0" stop-color="#FFB060"/><stop offset="0.6" stop-color="#E8741A"/><stop offset="1" stop-color="#B84A08"/></radialGradient></defs><circle cx="5" cy="5" r="4.7" fill="url(#nrm)"/><circle cx="5" cy="5" r="1.9" fill="#FFF4E8"/></svg>
<div class="t" style="left:567px;top:397.50px;font-size:8.0px;color:#111;transform:scaleX(0.82);transform-origin:0 0;">Normal</div>
<svg style="position:absolute;left:624px;top:395.925px" width="8" height="11" viewBox="0 0 8 11"><defs><linearGradient id="docg" x1="0" y1="0" x2="1" y2="1"><stop offset="0" stop-color="#FFFFFF"/><stop offset="1" stop-color="#C9DBF2"/></linearGradient></defs><path d="M0.5 0.5 L5 0.5 L7.5 3 L7.5 10.5 L0.5 10.5 Z" fill="url(#docg)" stroke="#8AA6CF" stroke-width="0.8"/><path d="M5 0.5 L5 3 L7.5 3" fill="#E8F0FA" stroke="#8AA6CF" stroke-width="0.7"/></svg>
<div class="t" style="left:634.9px;top:397.50px;font-size:8.0px;color:#111;transform:scaleX(0.82);transform-origin:0 0;">Created</div>
<div class="t" style="left:699.7px;width:0;display:flex;justify-content:center;top:397.50px;font-size:8.0px;color:#111;"><span style="display:inline-block;transform:scaleX(0.82);transform-origin:50% 0">0 %</span></div>
<div class="t" style="left:727.0px;top:397.70px;font-size:8.0px;color:#111;transform:scaleX(0.873);transform-origin:0 0;">30.09.2008 17:35</div>
<svg style="position:absolute;left:220.3px;top:410.57500000000005px" width="9" height="9" viewBox="0 0 9 9"><defs><linearGradient id="cbg" x1="0" y1="0" x2="1" y2="1"><stop offset="0" stop-color="#DCDBD3"/><stop offset="1" stop-color="#FFFFFF"/></linearGradient></defs><rect x="0.5" y="0.5" width="8" height="8" rx="0.8" fill="url(#cbg)" stroke="#7F9DB9" stroke-width="1"/></svg>
<div class="t" style="left:244.2px;top:411.25px;font-size:8.0px;color:#111;transform:scaleX(0.845);transform-origin:0 0;">4.12 Theft</div>
<svg style="position:absolute;left:555.0px;top:409.875px" width="10" height="10" viewBox="0 0 10 10"><defs><radialGradient id="nrm" cx="0.4" cy="0.35" r="0.7"><stop offset="0" stop-color="#FFB060"/><stop offset="0.6" stop-color="#E8741A"/><stop offset="1" stop-color="#B84A08"/></radialGradient></defs><circle cx="5" cy="5" r="4.7" fill="url(#nrm)"/><circle cx="5" cy="5" r="1.9" fill="#FFF4E8"/></svg>
<div class="t" style="left:567px;top:411.25px;font-size:8.0px;color:#111;transform:scaleX(0.82);transform-origin:0 0;">Normal</div>
<svg style="position:absolute;left:624px;top:409.675px" width="8" height="11" viewBox="0 0 8 11"><defs><linearGradient id="docg" x1="0" y1="0" x2="1" y2="1"><stop offset="0" stop-color="#FFFFFF"/><stop offset="1" stop-color="#C9DBF2"/></linearGradient></defs><path d="M0.5 0.5 L5 0.5 L7.5 3 L7.5 10.5 L0.5 10.5 Z" fill="url(#docg)" stroke="#8AA6CF" stroke-width="0.8"/><path d="M5 0.5 L5 3 L7.5 3" fill="#E8F0FA" stroke="#8AA6CF" stroke-width="0.7"/></svg>
<div class="t" style="left:634.9px;top:411.25px;font-size:8.0px;color:#111;transform:scaleX(0.82);transform-origin:0 0;">Created</div>
<div class="t" style="left:699.7px;width:0;display:flex;justify-content:center;top:411.25px;font-size:8.0px;color:#111;"><span style="display:inline-block;transform:scaleX(0.82);transform-origin:50% 0">0 %</span></div>
<div class="t" style="left:727.0px;top:411.45px;font-size:8.0px;color:#111;transform:scaleX(0.873);transform-origin:0 0;">30.09.2008 17:35</div>
<svg style="position:absolute;left:220.3px;top:424.32500000000005px" width="9" height="9" viewBox="0 0 9 9"><defs><linearGradient id="cbg" x1="0" y1="0" x2="1" y2="1"><stop offset="0" stop-color="#DCDBD3"/><stop offset="1" stop-color="#FFFFFF"/></linearGradient></defs><rect x="0.5" y="0.5" width="8" height="8" rx="0.8" fill="url(#cbg)" stroke="#7F9DB9" stroke-width="1"/></svg>
<div class="t" style="left:244.2px;top:425.00px;font-size:8.0px;color:#111;transform:scaleX(0.845);transform-origin:0 0;">4.13 Check fraud</div>
<svg style="position:absolute;left:555.0px;top:423.625px" width="10" height="10" viewBox="0 0 10 10"><defs><radialGradient id="nrm" cx="0.4" cy="0.35" r="0.7"><stop offset="0" stop-color="#FFB060"/><stop offset="0.6" stop-color="#E8741A"/><stop offset="1" stop-color="#B84A08"/></radialGradient></defs><circle cx="5" cy="5" r="4.7" fill="url(#nrm)"/><circle cx="5" cy="5" r="1.9" fill="#FFF4E8"/></svg>
<div class="t" style="left:567px;top:425.00px;font-size:8.0px;color:#111;transform:scaleX(0.82);transform-origin:0 0;">Normal</div>
<svg style="position:absolute;left:624px;top:423.425px" width="8" height="11" viewBox="0 0 8 11"><defs><linearGradient id="docg" x1="0" y1="0" x2="1" y2="1"><stop offset="0" stop-color="#FFFFFF"/><stop offset="1" stop-color="#C9DBF2"/></linearGradient></defs><path d="M0.5 0.5 L5 0.5 L7.5 3 L7.5 10.5 L0.5 10.5 Z" fill="url(#docg)" stroke="#8AA6CF" stroke-width="0.8"/><path d="M5 0.5 L5 3 L7.5 3" fill="#E8F0FA" stroke="#8AA6CF" stroke-width="0.7"/></svg>
<div class="t" style="left:634.9px;top:425.00px;font-size:8.0px;color:#111;transform:scaleX(0.82);transform-origin:0 0;">Created</div>
<div class="t" style="left:699.7px;width:0;display:flex;justify-content:center;top:425.00px;font-size:8.0px;color:#111;"><span style="display:inline-block;transform:scaleX(0.82);transform-origin:50% 0">0 %</span></div>
<div class="t" style="left:727.0px;top:425.20px;font-size:8.0px;color:#111;transform:scaleX(0.873);transform-origin:0 0;">30.09.2008 17:35</div>
<svg style="position:absolute;left:220.3px;top:438.07500000000005px" width="9" height="9" viewBox="0 0 9 9"><defs><linearGradient id="cbg" x1="0" y1="0" x2="1" y2="1"><stop offset="0" stop-color="#DCDBD3"/><stop offset="1" stop-color="#FFFFFF"/></linearGradient></defs><rect x="0.5" y="0.5" width="8" height="8" rx="0.8" fill="url(#cbg)" stroke="#7F9DB9" stroke-width="1"/></svg>
<div class="t" style="left:244.2px;top:438.75px;font-size:8.0px;color:#111;transform:scaleX(0.845);transform-origin:0 0;">4.14 Embezzlement</div>
<svg style="position:absolute;left:555.0px;top:437.375px" width="10" height="10" viewBox="0 0 10 10"><defs><radialGradient id="nrm" cx="0.4" cy="0.35" r="0.7"><stop offset="0" stop-color="#FFB060"/><stop offset="0.6" stop-color="#E8741A"/><stop offset="1" stop-color="#B84A08"/></radialGradient></defs><circle cx="5" cy="5" r="4.7" fill="url(#nrm)"/><circle cx="5" cy="5" r="1.9" fill="#FFF4E8"/></svg>
<div class="t" style="left:567px;top:438.75px;font-size:8.0px;color:#111;transform:scaleX(0.82);transform-origin:0 0;">Normal</div>
<svg style="position:absolute;left:624px;top:437.175px" width="8" height="11" viewBox="0 0 8 11"><defs><linearGradient id="docg" x1="0" y1="0" x2="1" y2="1"><stop offset="0" stop-color="#FFFFFF"/><stop offset="1" stop-color="#C9DBF2"/></linearGradient></defs><path d="M0.5 0.5 L5 0.5 L7.5 3 L7.5 10.5 L0.5 10.5 Z" fill="url(#docg)" stroke="#8AA6CF" stroke-width="0.8"/><path d="M5 0.5 L5 3 L7.5 3" fill="#E8F0FA" stroke="#8AA6CF" stroke-width="0.7"/></svg>
<div class="t" style="left:634.9px;top:438.75px;font-size:8.0px;color:#111;transform:scaleX(0.82);transform-origin:0 0;">Created</div>
<div class="t" style="left:699.7px;width:0;display:flex;justify-content:center;top:438.75px;font-size:8.0px;color:#111;"><span style="display:inline-block;transform:scaleX(0.82);transform-origin:50% 0">0 %</span></div>
<div class="t" style="left:727.0px;top:438.95px;font-size:8.0px;color:#111;transform:scaleX(0.873);transform-origin:0 0;">30.09.2008 17:36</div>
<svg style="position:absolute;left:220.3px;top:451.82500000000005px" width="9" height="9" viewBox="0 0 9 9"><defs><linearGradient id="cbg" x1="0" y1="0" x2="1" y2="1"><stop offset="0" stop-color="#DCDBD3"/><stop offset="1" stop-color="#FFFFFF"/></linearGradient></defs><rect x="0.5" y="0.5" width="8" height="8" rx="0.8" fill="url(#cbg)" stroke="#7F9DB9" stroke-width="1"/></svg>
<div class="t" style="left:244.2px;top:452.50px;font-size:8.0px;color:#111;transform:scaleX(0.845);transform-origin:0 0;">4.15 Key Man insurance</div>
<svg style="position:absolute;left:555.0px;top:451.125px" width="10" height="10" viewBox="0 0 10 10"><defs><radialGradient id="nrm" cx="0.4" cy="0.35" r="0.7"><stop offset="0" stop-color="#FFB060"/><stop offset="0.6" stop-color="#E8741A"/><stop offset="1" stop-color="#B84A08"/></radialGradient></defs><circle cx="5" cy="5" r="4.7" fill="url(#nrm)"/><circle cx="5" cy="5" r="1.9" fill="#FFF4E8"/></svg>
<div class="t" style="left:567px;top:452.50px;font-size:8.0px;color:#111;transform:scaleX(0.82);transform-origin:0 0;">Normal</div>
<svg style="position:absolute;left:624px;top:450.925px" width="8" height="11" viewBox="0 0 8 11"><defs><linearGradient id="docg" x1="0" y1="0" x2="1" y2="1"><stop offset="0" stop-color="#FFFFFF"/><stop offset="1" stop-color="#C9DBF2"/></linearGradient></defs><path d="M0.5 0.5 L5 0.5 L7.5 3 L7.5 10.5 L0.5 10.5 Z" fill="url(#docg)" stroke="#8AA6CF" stroke-width="0.8"/><path d="M5 0.5 L5 3 L7.5 3" fill="#E8F0FA" stroke="#8AA6CF" stroke-width="0.7"/></svg>
<div class="t" style="left:634.9px;top:452.50px;font-size:8.0px;color:#111;transform:scaleX(0.82);transform-origin:0 0;">Created</div>
<div class="t" style="left:699.7px;width:0;display:flex;justify-content:center;top:452.50px;font-size:8.0px;color:#111;"><span style="display:inline-block;transform:scaleX(0.82);transform-origin:50% 0">0 %</span></div>
<div class="t" style="left:727.0px;top:452.70px;font-size:8.0px;color:#111;transform:scaleX(0.873);transform-origin:0 0;">30.09.2008 17:36</div>
<svg style="position:absolute;left:220.3px;top:465.57500000000005px" width="9" height="9" viewBox="0 0 9 9"><defs><linearGradient id="cbg" x1="0" y1="0" x2="1" y2="1"><stop offset="0" stop-color="#DCDBD3"/><stop offset="1" stop-color="#FFFFFF"/></linearGradient></defs><rect x="0.5" y="0.5" width="8" height="8" rx="0.8" fill="url(#cbg)" stroke="#7F9DB9" stroke-width="1"/></svg>
<div class="t" style="left:244.2px;top:466.25px;font-size:8.0px;color:#111;transform:scaleX(0.845);transform-origin:0 0;">4.16 Civil Authority losses (closure of airports and train stations in emergencies)</div>
<svg style="position:absolute;left:555.0px;top:464.875px" width="10" height="10" viewBox="0 0 10 10"><defs><radialGradient id="nrm" cx="0.4" cy="0.35" r="0.7"><stop offset="0" stop-color="#FFB060"/><stop offset="0.6" stop-color="#E8741A"/><stop offset="1" stop-color="#B84A08"/></radialGradient></defs><circle cx="5" cy="5" r="4.7" fill="url(#nrm)"/><circle cx="5" cy="5" r="1.9" fill="#FFF4E8"/></svg>
<div class="t" style="left:567px;top:466.25px;font-size:8.0px;color:#111;transform:scaleX(0.82);transform-origin:0 0;">Normal</div>
<svg style="position:absolute;left:624px;top:464.675px" width="8" height="11" viewBox="0 0 8 11"><defs><linearGradient id="docg" x1="0" y1="0" x2="1" y2="1"><stop offset="0" stop-color="#FFFFFF"/><stop offset="1" stop-color="#C9DBF2"/></linearGradient></defs><path d="M0.5 0.5 L5 0.5 L7.5 3 L7.5 10.5 L0.5 10.5 Z" fill="url(#docg)" stroke="#8AA6CF" stroke-width="0.8"/><path d="M5 0.5 L5 3 L7.5 3" fill="#E8F0FA" stroke="#8AA6CF" stroke-width="0.7"/></svg>
<div class="t" style="left:634.9px;top:466.25px;font-size:8.0px;color:#111;transform:scaleX(0.82);transform-origin:0 0;">Created</div>
<div class="t" style="left:699.7px;width:0;display:flex;justify-content:center;top:466.25px;font-size:8.0px;color:#111;"><span style="display:inline-block;transform:scaleX(0.82);transform-origin:50% 0">0 %</span></div>
<div class="t" style="left:727.0px;top:466.45px;font-size:8.0px;color:#111;transform:scaleX(0.873);transform-origin:0 0;">30.09.2008 17:36</div>
<svg style="position:absolute;left:220.3px;top:479.32500000000005px" width="9" height="9" viewBox="0 0 9 9"><defs><linearGradient id="cbg" x1="0" y1="0" x2="1" y2="1"><stop offset="0" stop-color="#DCDBD3"/><stop offset="1" stop-color="#FFFFFF"/></linearGradient></defs><rect x="0.5" y="0.5" width="8" height="8" rx="0.8" fill="url(#cbg)" stroke="#7F9DB9" stroke-width="1"/></svg>
<div class="t" style="left:244.2px;top:480.00px;font-size:8.0px;color:#111;transform:scaleX(0.845);transform-origin:0 0;">4.17 E &amp; O (Errors and Omissions)</div>
<svg style="position:absolute;left:555.0px;top:478.625px" width="10" height="10" viewBox="0 0 10 10"><defs><radialGradient id="nrm" cx="0.4" cy="0.35" r="0.7"><stop offset="0" stop-color="#FFB060"/><stop offset="0.6" stop-color="#E8741A"/><stop offset="1" stop-color="#B84A08"/></radialGradient></defs><circle cx="5" cy="5" r="4.7" fill="url(#nrm)"/><circle cx="5" cy="5" r="1.9" fill="#FFF4E8"/></svg>
<div class="t" style="left:567px;top:480.00px;font-size:8.0px;color:#111;transform:scaleX(0.82);transform-origin:0 0;">Normal</div>
<svg style="position:absolute;left:624px;top:478.425px" width="8" height="11" viewBox="0 0 8 11"><defs><linearGradient id="docg" x1="0" y1="0" x2="1" y2="1"><stop offset="0" stop-color="#FFFFFF"/><stop offset="1" stop-color="#C9DBF2"/></linearGradient></defs><path d="M0.5 0.5 L5 0.5 L7.5 3 L7.5 10.5 L0.5 10.5 Z" fill="url(#docg)" stroke="#8AA6CF" stroke-width="0.8"/><path d="M5 0.5 L5 3 L7.5 3" fill="#E8F0FA" stroke="#8AA6CF" stroke-width="0.7"/></svg>
<div class="t" style="left:634.9px;top:480.00px;font-size:8.0px;color:#111;transform:scaleX(0.82);transform-origin:0 0;">Created</div>
<div class="t" style="left:699.7px;width:0;display:flex;justify-content:center;top:480.00px;font-size:8.0px;color:#111;"><span style="display:inline-block;transform:scaleX(0.82);transform-origin:50% 0">0 %</span></div>
<div class="t" style="left:727.0px;top:480.20px;font-size:8.0px;color:#111;transform:scaleX(0.873);transform-origin:0 0;">30.09.2008 17:36</div>
<svg style="position:absolute;left:220.3px;top:493.07500000000005px" width="9" height="9" viewBox="0 0 9 9"><defs><linearGradient id="cbg" x1="0" y1="0" x2="1" y2="1"><stop offset="0" stop-color="#DCDBD3"/><stop offset="1" stop-color="#FFFFFF"/></linearGradient></defs><rect x="0.5" y="0.5" width="8" height="8" rx="0.8" fill="url(#cbg)" stroke="#7F9DB9" stroke-width="1"/></svg>
<div class="t" style="left:244.2px;top:493.75px;font-size:8.0px;color:#111;transform:scaleX(0.845);transform-origin:0 0;">4.18 Vandalism</div>
<svg style="position:absolute;left:555.0px;top:492.375px" width="10" height="10" viewBox="0 0 10 10"><defs><radialGradient id="nrm" cx="0.4" cy="0.35" r="0.7"><stop offset="0" stop-color="#FFB060"/><stop offset="0.6" stop-color="#E8741A"/><stop offset="1" stop-color="#B84A08"/></radialGradient></defs><circle cx="5" cy="5" r="4.7" fill="url(#nrm)"/><circle cx="5" cy="5" r="1.9" fill="#FFF4E8"/></svg>
<div class="t" style="left:567px;top:493.75px;font-size:8.0px;color:#111;transform:scaleX(0.82);transform-origin:0 0;">Normal</div>
<svg style="position:absolute;left:624px;top:492.175px" width="8" height="11" viewBox="0 0 8 11"><defs><linearGradient id="docg" x1="0" y1="0" x2="1" y2="1"><stop offset="0" stop-color="#FFFFFF"/><stop offset="1" stop-color="#C9DBF2"/></linearGradient></defs><path d="M0.5 0.5 L5 0.5 L7.5 3 L7.5 10.5 L0.5 10.5 Z" fill="url(#docg)" stroke="#8AA6CF" stroke-width="0.8"/><path d="M5 0.5 L5 3 L7.5 3" fill="#E8F0FA" stroke="#8AA6CF" stroke-width="0.7"/></svg>
<div class="t" style="left:634.9px;top:493.75px;font-size:8.0px;color:#111;transform:scaleX(0.82);transform-origin:0 0;">Created</div>
<div class="t" style="left:699.7px;width:0;display:flex;justify-content:center;top:493.75px;font-size:8.0px;color:#111;"><span style="display:inline-block;transform:scaleX(0.82);transform-origin:50% 0">0 %</span></div>
<div class="t" style="left:727.0px;top:493.95px;font-size:8.0px;color:#111;transform:scaleX(0.873);transform-origin:0 0;">30.09.2008 17:36</div>
<svg style="position:absolute;left:220.3px;top:506.82500000000005px" width="9" height="9" viewBox="0 0 9 9"><defs><linearGradient id="cbg" x1="0" y1="0" x2="1" y2="1"><stop offset="0" stop-color="#DCDBD3"/><stop offset="1" stop-color="#FFFFFF"/></linearGradient></defs><rect x="0.5" y="0.5" width="8" height="8" rx="0.8" fill="url(#cbg)" stroke="#7F9DB9" stroke-width="1"/></svg>
<div class="t" style="left:244.2px;top:507.50px;font-size:8.0px;color:#111;transform:scaleX(0.845);transform-origin:0 0;">4.19 Roof collapse or damage</div>
<svg style="position:absolute;left:555.0px;top:506.125px" width="10" height="10" viewBox="0 0 10 10"><defs><radialGradient id="nrm" cx="0.4" cy="0.35" r="0.7"><stop offset="0" stop-color="#FFB060"/><stop offset="0.6" stop-color="#E8741A"/><stop offset="1" stop-color="#B84A08"/></radialGradient></defs><circle cx="5" cy="5" r="4.7" fill="url(#nrm)"/><circle cx="5" cy="5" r="1.9" fill="#FFF4E8"/></svg>
<div class="t" style="left:567px;top:507.50px;font-size:8.0px;color:#111;transform:scaleX(0.82);transform-origin:0 0;">Normal</div>
<svg style="position:absolute;left:624px;top:505.925px" width="8" height="11" viewBox="0 0 8 11"><defs><linearGradient id="docg" x1="0" y1="0" x2="1" y2="1"><stop offset="0" stop-color="#FFFFFF"/><stop offset="1" stop-color="#C9DBF2"/></linearGradient></defs><path d="M0.5 0.5 L5 0.5 L7.5 3 L7.5 10.5 L0.5 10.5 Z" fill="url(#docg)" stroke="#8AA6CF" stroke-width="0.8"/><path d="M5 0.5 L5 3 L7.5 3" fill="#E8F0FA" stroke="#8AA6CF" stroke-width="0.7"/></svg>
<div class="t" style="left:634.9px;top:507.50px;font-size:8.0px;color:#111;transform:scaleX(0.82);transform-origin:0 0;">Created</div>
<div class="t" style="left:699.7px;width:0;display:flex;justify-content:center;top:507.50px;font-size:8.0px;color:#111;"><span style="display:inline-block;transform:scaleX(0.82);transform-origin:50% 0">0 %</span></div>
<div class="t" style="left:727.0px;top:507.70px;font-size:8.0px;color:#111;transform:scaleX(0.873);transform-origin:0 0;">30.09.2008 17:36</div>
<svg style="position:absolute;left:220.3px;top:520.575px" width="9" height="9" viewBox="0 0 9 9"><defs><linearGradient id="cbg" x1="0" y1="0" x2="1" y2="1"><stop offset="0" stop-color="#DCDBD3"/><stop offset="1" stop-color="#FFFFFF"/></linearGradient></defs><rect x="0.5" y="0.5" width="8" height="8" rx="0.8" fill="url(#cbg)" stroke="#7F9DB9" stroke-width="1"/><path d="M2.2 4.6 L3.9 6.3 L6.9 2.8" fill="none" stroke="#21A121" stroke-width="1.5"/></svg>
<div class="t" style="left:244.2px;top:521.25px;font-size:8.0px;color:#111;transform:scaleX(0.845);transform-origin:0 0;text-decoration:line-through;">4.1 Fire</div>
<svg style="position:absolute;left:555.0px;top:519.875px" width="10" height="10" viewBox="0 0 10 10"><defs><radialGradient id="nrm" cx="0.4" cy="0.35" r="0.7"><stop offset="0" stop-color="#FFB060"/><stop offset="0.6" stop-color="#E8741A"/><stop offset="1" stop-color="#B84A08"/></radialGradient></defs><circle cx="5" cy="5" r="4.7" fill="url(#nrm)"/><circle cx="5" cy="5" r="1.9" fill="#FFF4E8"/></svg>
<div class="t" style="left:567px;top:521.25px;font-size:8.0px;color:#111;transform:scaleX(0.82);transform-origin:0 0;text-decoration:line-through;">Normal</div>
<svg style="position:absolute;left:622.3px;top:519.975px" width="10" height="10" viewBox="0 0 10 10"><circle cx="5" cy="5" r="4.6" fill="#F0A048" stroke="#D07A20" stroke-width="0.7"/><circle cx="5" cy="5" r="3.1" fill="#FFD8A0"/><path d="M3.2 5.3 L4.6 6.5 L6.9 3.4" fill="none" stroke="#D86A10" stroke-width="1"/></svg>
<div class="t" style="left:635px;top:521.25px;font-size:8.0px;color:#111;transform:scaleX(0.82);transform-origin:0 0;text-decoration:line-through;">Ok</div>
<div style="left:679.2px;top:520.08px;width:42px;height:9.8px;background:linear-gradient(#4AD44A,#2CC62C 50%,#38CC38);box-shadow:inset 0 0 0 1px #A6EAA6, inset 0 0 1.5px 1.5px #6EDC6E"></div>
<div class="t" style="left:699.7px;width:0;display:flex;justify-content:center;top:521.25px;font-size:8.0px;color:#6A5A80;text-decoration:line-through;"><span style="display:inline-block;transform:scaleX(0.82);transform-origin:50% 0">100 %</span></div>
<div class="t" style="left:727.0px;top:521.45px;font-size:8.0px;color:#111;transform:scaleX(0.873);transform-origin:0 0;text-decoration:line-through;">30.09.2008 17:38</div>
<svg style="position:absolute;left:220.3px;top:534.325px" width="9" height="9" viewBox="0 0 9 9"><defs><linearGradient id="cbg" x1="0" y1="0" x2="1" y2="1"><stop offset="0" stop-color="#DCDBD3"/><stop offset="1" stop-color="#FFFFFF"/></linearGradient></defs><rect x="0.5" y="0.5" width="8" height="8" rx="0.8" fill="url(#cbg)" stroke="#7F9DB9" stroke-width="1"/><path d="M2.2 4.6 L3.9 6.3 L6.9 2.8" fill="none" stroke="#21A121" stroke-width="1.5"/></svg>
<div class="t" style="left:244.2px;top:535.00px;font-size:8.0px;color:#111;transform:scaleX(0.845);transform-origin:0 0;text-decoration:line-through;">4.3 Windstorm</div>
<svg style="position:absolute;left:555.0px;top:533.625px" width="10" height="10" viewBox="0 0 10 10"><defs><radialGradient id="nrm" cx="0.4" cy="0.35" r="0.7"><stop offset="0" stop-color="#FFB060"/><stop offset="0.6" stop-color="#E8741A"/><stop offset="1" stop-color="#B84A08"/></radialGradient></defs><circle cx="5" cy="5" r="4.7" fill="url(#nrm)"/><circle cx="5" cy="5" r="1.9" fill="#FFF4E8"/></svg>
<div class="t" style="left:567px;top:535.00px;font-size:8.0px;color:#111;transform:scaleX(0.82);transform-origin:0 0;text-decoration:line-through;">Normal</div>
<svg style="position:absolute;left:622.3px;top:533.725px" width="10" height="10" viewBox="0 0 10 10"><circle cx="5" cy="5" r="4.6" fill="#F0A048" stroke="#D07A20" stroke-width="0.7"/><circle cx="5" cy="5" r="3.1" fill="#FFD8A0"/><path d="M3.2 5.3 L4.6 6.5 L6.9 3.4" fill="none" stroke="#D86A10" stroke-width="1"/></svg>
<div class="t" style="left:635px;top:535.00px;font-size:8.0px;color:#111;transform:scaleX(0.82);transform-origin:0 0;text-decoration:line-through;">Ok</div>
<div style="left:679.2px;top:533.83px;width:42px;height:9.8px;background:linear-gradient(#4AD44A,#2CC62C 50%,#38CC38);box-shadow:inset 0 0 0 1px #A6EAA6, inset 0 0 1.5px 1.5px #6EDC6E"></div>
<div class="t" style="left:699.7px;width:0;display:flex;justify-content:center;top:535.00px;font-size:8.0px;color:#6A5A80;text-decoration:line-through;"><span style="display:inline-block;transform:scaleX(0.82);transform-origin:50% 0">100 %</span></div>
<div class="t" style="left:727.0px;top:535.20px;font-size:8.0px;color:#111;transform:scaleX(0.873);transform-origin:0 0;text-decoration:line-through;">30.09.2008 17:38</div>
<svg style="position:absolute;left:220.3px;top:548.075px" width="9" height="9" viewBox="0 0 9 9"><defs><linearGradient id="cbg" x1="0" y1="0" x2="1" y2="1"><stop offset="0" stop-color="#DCDBD3"/><stop offset="1" stop-color="#FFFFFF"/></linearGradient></defs><rect x="0.5" y="0.5" width="8" height="8" rx="0.8" fill="url(#cbg)" stroke="#7F9DB9" stroke-width="1"/><path d="M2.2 4.6 L3.9 6.3 L6.9 2.8" fill="none" stroke="#21A121" stroke-width="1.5"/></svg>
<div class="t" style="left:244.2px;top:548.75px;font-size:8.0px;color:#111;transform:scaleX(0.845);transform-origin:0 0;text-decoration:line-through;">4.20 Foundation damage or collapse</div>
<svg style="position:absolute;left:555.0px;top:547.375px" width="10" height="10" viewBox="0 0 10 10"><defs><radialGradient id="nrm" cx="0.4" cy="0.35" r="0.7"><stop offset="0" stop-color="#FFB060"/><stop offset="0.6" stop-color="#E8741A"/><stop offset="1" stop-color="#B84A08"/></radialGradient></defs><circle cx="5" cy="5" r="4.7" fill="url(#nrm)"/><circle cx="5" cy="5" r="1.9" fill="#FFF4E8"/></svg>
<div class="t" style="left:567px;top:548.75px;font-size:8.0px;color:#111;transform:scaleX(0.82);transform-origin:0 0;text-decoration:line-through;">Normal</div>
<svg style="position:absolute;left:622.3px;top:547.475px" width="10" height="10" viewBox="0 0 10 10"><circle cx="5" cy="5" r="4.6" fill="#F0A048" stroke="#D07A20" stroke-width="0.7"/><circle cx="5" cy="5" r="3.1" fill="#FFD8A0"/><path d="M3.2 5.3 L4.6 6.5 L6.9 3.4" fill="none" stroke="#D86A10" stroke-width="1"/></svg>
<div class="t" style="left:635px;top:548.75px;font-size:8.0px;color:#111;transform:scaleX(0.82);transform-origin:0 0;text-decoration:line-through;">Ok</div>
<div style="left:679.2px;top:547.58px;width:42px;height:9.8px;background:linear-gradient(#4AD44A,#2CC62C 50%,#38CC38);box-shadow:inset 0 0 0 1px #A6EAA6, inset 0 0 1.5px 1.5px #6EDC6E"></div>
<div class="t" style="left:699.7px;width:0;display:flex;justify-content:center;top:548.75px;font-size:8.0px;color:#6A5A80;text-decoration:line-through;"><span style="display:inline-block;transform:scaleX(0.82);transform-origin:50% 0">100 %</span></div>
<div class="t" style="left:727.0px;top:548.95px;font-size:8.0px;color:#111;transform:scaleX(0.873);transform-origin:0 0;text-decoration:line-through;">30.09.2008 17:38</div>
<svg style="position:absolute;left:220.3px;top:561.825px" width="9" height="9" viewBox="0 0 9 9"><defs><linearGradient id="cbg" x1="0" y1="0" x2="1" y2="1"><stop offset="0" stop-color="#DCDBD3"/><stop offset="1" stop-color="#FFFFFF"/></linearGradient></defs><rect x="0.5" y="0.5" width="8" height="8" rx="0.8" fill="url(#cbg)" stroke="#7F9DB9" stroke-width="1"/><path d="M2.2 4.6 L3.9 6.3 L6.9 2.8" fill="none" stroke="#21A121" stroke-width="1.5"/></svg>
<div class="t" style="left:244.2px;top:562.50px;font-size:8.0px;color:#111;transform:scaleX(0.845);transform-origin:0 0;text-decoration:line-through;">4.21 Broken glass or damaged buildings and structures (caused by terrorism, war or riots)</div>
<svg style="position:absolute;left:555.0px;top:561.125px" width="10" height="10" viewBox="0 0 10 10"><defs><radialGradient id="nrm" cx="0.4" cy="0.35" r="0.7"><stop offset="0" stop-color="#FFB060"/><stop offset="0.6" stop-color="#E8741A"/><stop offset="1" stop-color="#B84A08"/></radialGradient></defs><circle cx="5" cy="5" r="4.7" fill="url(#nrm)"/><circle cx="5" cy="5" r="1.9" fill="#FFF4E8"/></svg>
<div class="t" style="left:567px;top:562.50px;font-size:8.0px;color:#111;transform:scaleX(0.82);transform-origin:0 0;text-decoration:line-through;">Normal</div>
<svg style="position:absolute;left:622.3px;top:561.225px" width="10" height="10" viewBox="0 0 10 10"><circle cx="5" cy="5" r="4.6" fill="#F0A048" stroke="#D07A20" stroke-width="0.7"/><circle cx="5" cy="5" r="3.1" fill="#FFD8A0"/><path d="M3.2 5.3 L4.6 6.5 L6.9 3.4" fill="none" stroke="#D86A10" stroke-width="1"/></svg>
<div class="t" style="left:635px;top:562.50px;font-size:8.0px;color:#111;transform:scaleX(0.82);transform-origin:0 0;text-decoration:line-through;">Ok</div>
<div style="left:679.2px;top:561.33px;width:42px;height:9.8px;background:linear-gradient(#4AD44A,#2CC62C 50%,#38CC38);box-shadow:inset 0 0 0 1px #A6EAA6, inset 0 0 1.5px 1.5px #6EDC6E"></div>
<div class="t" style="left:699.7px;width:0;display:flex;justify-content:center;top:562.50px;font-size:8.0px;color:#6A5A80;text-decoration:line-through;"><span style="display:inline-block;transform:scaleX(0.82);transform-origin:50% 0">100 %</span></div>
<div class="t" style="left:727.0px;top:562.70px;font-size:8.0px;color:#111;transform:scaleX(0.873);transform-origin:0 0;text-decoration:line-through;">30.09.2008 17:38</div>
<svg style="position:absolute;left:220.3px;top:575.575px" width="9" height="9" viewBox="0 0 9 9"><defs><linearGradient id="cbg" x1="0" y1="0" x2="1" y2="1"><stop offset="0" stop-color="#DCDBD3"/><stop offset="1" stop-color="#FFFFFF"/></linearGradient></defs><rect x="0.5" y="0.5" width="8" height="8" rx="0.8" fill="url(#cbg)" stroke="#7F9DB9" stroke-width="1"/><path d="M2.2 4.6 L3.9 6.3 L6.9 2.8" fill="none" stroke="#21A121" stroke-width="1.5"/></svg>
<div class="t" style="left:244.2px;top:576.25px;font-size:8.0px;color:#111;transform:scaleX(0.845);transform-origin:0 0;text-decoration:line-through;">4.22 Termite/insect/vermin damage</div>
<svg style="position:absolute;left:555.0px;top:574.875px" width="10" height="10" viewBox="0 0 10 10"><defs><radialGradient id="nrm" cx="0.4" cy="0.35" r="0.7"><stop offset="0" stop-color="#FFB060"/><stop offset="0.6" stop-color="#E8741A"/><stop offset="1" stop-color="#B84A08"/></radialGradient></defs><circle cx="5" cy="5" r="4.7" fill="url(#nrm)"/><circle cx="5" cy="5" r="1.9" fill="#FFF4E8"/></svg>
<div class="t" style="left:567px;top:576.25px;font-size:8.0px;color:#111;transform:scaleX(0.82);transform-origin:0 0;text-decoration:line-through;">Normal</div>
<svg style="position:absolute;left:622.3px;top:574.975px" width="10" height="10" viewBox="0 0 10 10"><circle cx="5" cy="5" r="4.6" fill="#F0A048" stroke="#D07A20" stroke-width="0.7"/><circle cx="5" cy="5" r="3.1" fill="#FFD8A0"/><path d="M3.2 5.3 L4.6 6.5 L6.9 3.4" fill="none" stroke="#D86A10" stroke-width="1"/></svg>
<div class="t" style="left:635px;top:576.25px;font-size:8.0px;color:#111;transform:scaleX(0.82);transform-origin:0 0;text-decoration:line-through;">Ok</div>
<div style="left:679.2px;top:575.08px;width:42px;height:9.8px;background:linear-gradient(#4AD44A,#2CC62C 50%,#38CC38);box-shadow:inset 0 0 0 1px #A6EAA6, inset 0 0 1.5px 1.5px #6EDC6E"></div>
<div class="t" style="left:699.7px;width:0;display:flex;justify-content:center;top:576.25px;font-size:8.0px;color:#6A5A80;text-decoration:line-through;"><span style="display:inline-block;transform:scaleX(0.82);transform-origin:50% 0">100 %</span></div>
<div class="t" style="left:727.0px;top:576.45px;font-size:8.0px;color:#111;transform:scaleX(0.873);transform-origin:0 0;text-decoration:line-through;">30.09.2008 17:38</div>
<svg style="position:absolute;left:220.3px;top:589.325px" width="9" height="9" viewBox="0 0 9 9"><defs><linearGradient id="cbg" x1="0" y1="0" x2="1" y2="1"><stop offset="0" stop-color="#DCDBD3"/><stop offset="1" stop-color="#FFFFFF"/></linearGradient></defs><rect x="0.5" y="0.5" width="8" height="8" rx="0.8" fill="url(#cbg)" stroke="#7F9DB9" stroke-width="1"/><path d="M2.2 4.6 L3.9 6.3 L6.9 2.8" fill="none" stroke="#21A121" stroke-width="1.5"/></svg>
<div class="t" style="left:244.2px;top:590.00px;font-size:8.0px;color:#111;transform:scaleX(0.845);transform-origin:0 0;text-decoration:line-through;">4.23 Mold/fungus damage</div>
<svg style="position:absolute;left:555.0px;top:588.625px" width="10" height="10" viewBox="0 0 10 10"><defs><radialGradient id="nrm" cx="0.4" cy="0.35" r="0.7"><stop offset="0" stop-color="#FFB060"/><stop offset="0.6" stop-color="#E8741A"/><stop offset="1" stop-color="#B84A08"/></radialGradient></defs><circle cx="5" cy="5" r="4.7" fill="url(#nrm)"/><circle cx="5" cy="5" r="1.9" fill="#FFF4E8"/></svg>
<div class="t" style="left:567px;top:590.00px;font-size:8.0px;color:#111;transform:scaleX(0.82);transform-origin:0 0;text-decoration:line-through;">Normal</div>
<svg style="position:absolute;left:622.3px;top:588.725px" width="10" height="10" viewBox="0 0 10 10"><circle cx="5" cy="5" r="4.6" fill="#F0A048" stroke="#D07A20" stroke-width="0.7"/><circle cx="5" cy="5" r="3.1" fill="#FFD8A0"/><path d="M3.2 5.3 L4.6 6.5 L6.9 3.4" fill="none" stroke="#D86A10" stroke-width="1"/></svg>
<div class="t" style="left:635px;top:590.00px;font-size:8.0px;color:#111;transform:scaleX(0.82);transform-origin:0 0;text-decoration:line-through;">Ok</div>
<div style="left:679.2px;top:588.83px;width:42px;height:9.8px;background:linear-gradient(#4AD44A,#2CC62C 50%,#38CC38);box-shadow:inset 0 0 0 1px #A6EAA6, inset 0 0 1.5px 1.5px #6EDC6E"></div>
<div class="t" style="left:699.7px;width:0;display:flex;justify-content:center;top:590.00px;font-size:8.0px;color:#6A5A80;text-decoration:line-through;"><span style="display:inline-block;transform:scaleX(0.82);transform-origin:50% 0">100 %</span></div>
<div class="t" style="left:727.0px;top:590.20px;font-size:8.0px;color:#111;transform:scaleX(0.873);transform-origin:0 0;text-decoration:line-through;">30.09.2008 17:38</div>
<div style="left:199px;top:610.3px;width:588.8px;height:15.5px;background:#ECE9D8"></div>
<div style="left:199px;top:610.3px;width:588.8px;height:0.9px;background:#D4D0C0"></div>
<div style="left:243.3px;top:612.4px;width:309.2px;height:12.5px;background:#F1EFE8;border-left:0.8px solid #C8C4B4;border-top:0.8px solid #C8C4B4;box-sizing:border-box"></div>
<div class="t" style="left:245.5px;top:614.72px;font-size:8.0px;color:#222;transform:scaleX(0.82);transform-origin:0 0;">Count: 39</div>
<div style="left:788.2px;top:48.7px;width:10.3px;height:577px;background:linear-gradient(90deg,#EEEDE5,#FBFAF6 30%,#FBFAF6 80%,#EFEEE8)"></div>
<div style="left:788.8px;top:50.2px;width:9.4px;height:9.6px;background:#C8D6FA;border-radius:1px"></div>
<svg style="position:absolute;left:788.8px;top:50.2px" width="9.4" height="9.6" viewBox="0 0 9.4 9.6"><path d="M2.4 6 L4.7 3.6 L7 6" fill="none" stroke="#4D6185" stroke-width="1.3"/></svg>
<div style="left:788.6px;top:113.4px;width:9.6px;height:500.4px;background:linear-gradient(90deg,#B6C8F6,#C4D3FA 50%,#B8C9F4);border:0.8px solid #DCE4FA;border-radius:1.5px"></div>
<div style="left:788.8px;top:615.6px;width:9.4px;height:9.8px;background:#C8D6FA;border-radius:1px"></div>
<svg style="position:absolute;left:788.8px;top:615.6px" width="9.4" height="9.8" viewBox="0 0 9.4 9.8"><path d="M2.4 3.8 L4.7 6.2 L7 3.8" fill="none" stroke="#4D6185" stroke-width="1.3"/></svg>
</body></html>
